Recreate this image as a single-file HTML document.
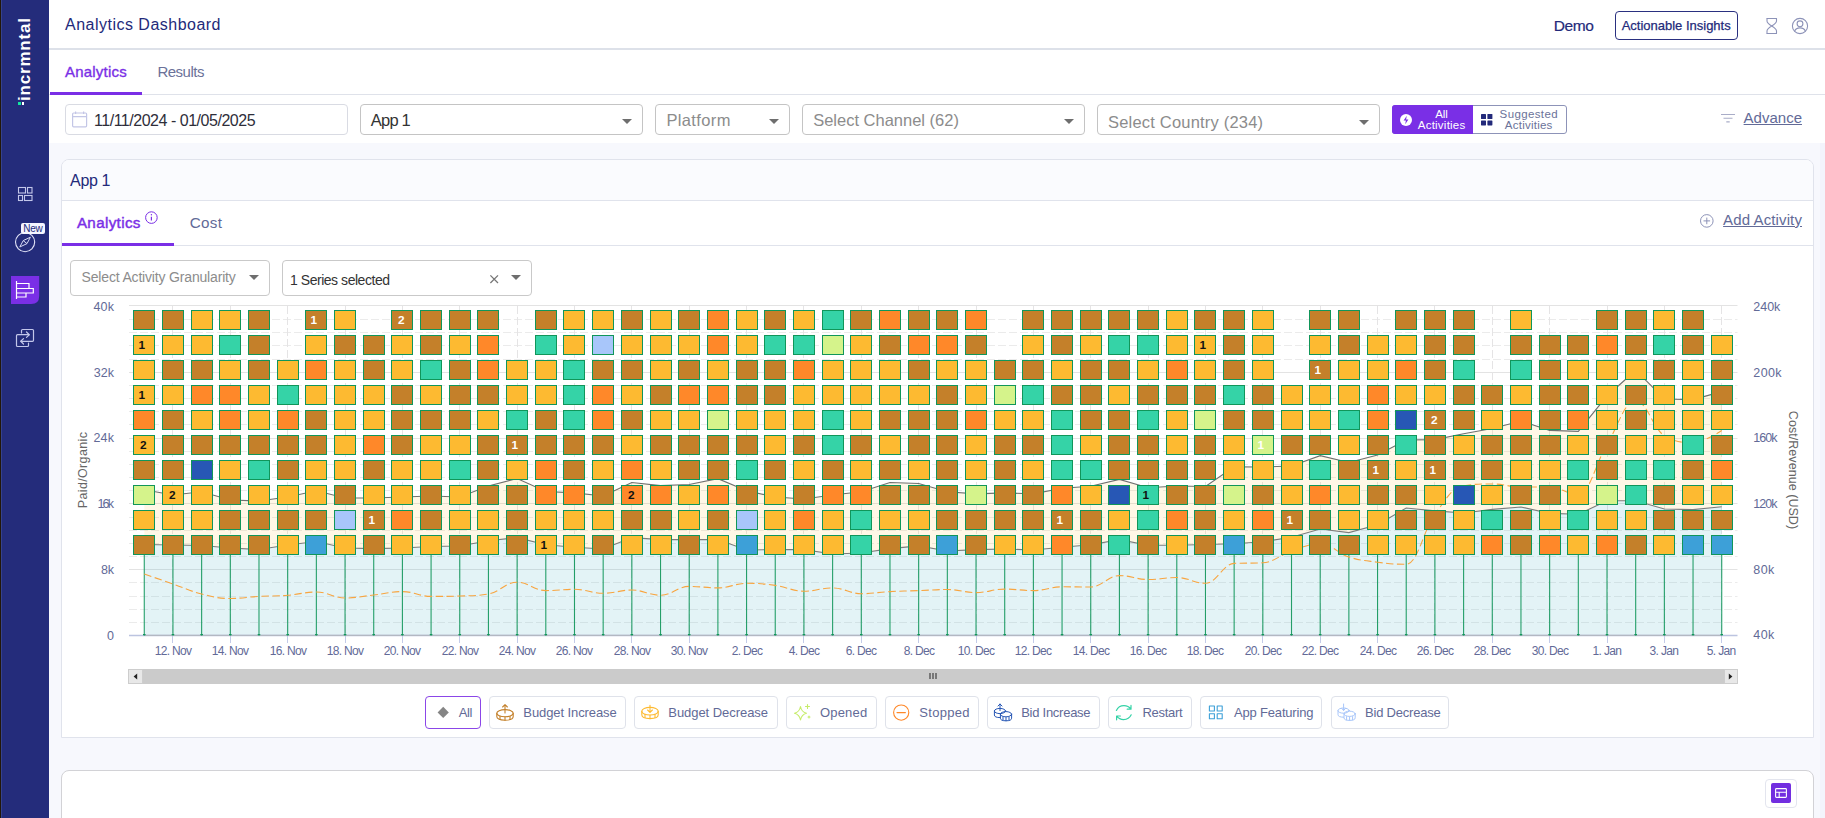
<!DOCTYPE html>
<html lang="en"><head><meta charset="utf-8"><title>Analytics Dashboard</title>
<style>
html,body{margin:0;padding:0}
body{width:1825px;height:818px;overflow:hidden;position:relative;background:#f7f8fd;font-family:"Liberation Sans",sans-serif}
.t{position:absolute;white-space:nowrap;line-height:1em;display:block}
.abs{position:absolute;box-sizing:border-box}
.sel{position:absolute;box-sizing:border-box;background:#fff;border:1px solid #c4c4c4;border-radius:4px}
.arr{position:absolute;width:0;height:0;border-left:5px solid transparent;border-right:5px solid transparent;border-top:5px solid #6e6e6e}
.lg{position:absolute;box-sizing:border-box;top:696px;height:32.5px;border:1px solid #dfe2ea;border-radius:4px;background:#fff}
svg{position:absolute;overflow:visible}
</style></head><body>

<div class="abs" style="left:0;top:0;width:49px;height:818px;background:#242c7b"></div>
<div class="abs" style="left:0;top:0;width:2px;height:818px;background:#34428e"></div>
<div class="abs" style="left:0;top:0;width:1px;height:818px;background:#231708"></div>
<div class="abs" style="left:0;top:0;width:49px;height:120px"><span class="t" style="left:30px;top:101.2px;font-size:17px;font-weight:700;color:#fff;letter-spacing:0.8px;transform-origin:0 0;transform:rotate(-90deg) translateY(-14.39px)">incrmntal</span></div>
<div class="abs" style="left:18px;top:102px;width:2.9px;height:3px;background:#12e6a0"></div>
<div class="abs" style="left:22px;top:102px;width:2.1px;height:3px;background:#fff"></div>
<svg style="left:0;top:0" width="50" height="400" viewBox="0 0 50 400" fill="none"><g stroke="#c3c7ea" stroke-width="1.1"><rect x="18.5" y="187.5" width="7" height="5.5"/><rect x="27.5" y="187.5" width="4.5" height="5.5"/><rect x="18.5" y="195.5" width="4" height="5"/><rect x="24.5" y="195.5" width="7.5" height="5"/></g><circle cx="25.1" cy="242.1" r="9.6" stroke="#e1e3f7" stroke-width="1.1"/><path d="M19.8 247 L23.2 240.6 L30.4 237.2 L27 243.6 Z M23.2 240.6 L27 243.6" stroke="#d5d8f3" stroke-width="1"/><path d="M11 276 H39.2 V296 Q39.2 304 31.2 304 H11 Z" fill="#7a2fe6"/><g stroke="#fff" stroke-width="1.2"><path d="M16.5 281 V299"/><path d="M16.5 283.5 H29 V288.5 H16.5"/><path d="M29 288.5 H33.3 V293 H16.5"/><path d="M26 293 V297 H16.5"/></g><g stroke="#c3c7ea" stroke-width="1.2" stroke-linejoin="round" stroke-linecap="round"><path d="M21.5 333 V330.5 Q21.5 329.5 22.5 329.5 H32.5 Q33.5 329.5 33.5 330.5 V340.3 Q33.5 341.3 32.5 341.3 H21"/><path d="M28.5 343 V345.5 Q28.5 346.5 27.5 346.5 H17.5 Q16.5 346.5 16.5 345.5 V335.7 Q16.5 334.7 17.5 334.7 H29"/><path d="M26.5 332 L29.3 334.7 L26.5 337.4"/><path d="M23.5 338.6 L20.7 341.3 L23.5 344"/></g></svg>
<div class="abs" style="left:21.3px;top:223.2px;width:23.5px;height:10.8px;background:#f4f5ff;border-radius:2px"></div>
<span class="t" style="left:23.20px;top:223.70px;font-size:10px;color:#232a7a;letter-spacing:-0.254px;">New</span>
<div class="abs" style="left:49px;top:0;width:1776px;height:50px;background:#fff;border-bottom:2px solid #dde1e9"></div>
<span class="t" style="left:65.00px;top:17.20px;font-size:16px;color:#232a7a;letter-spacing:0.487px;">Analytics Dashboard</span>
<span class="t" style="left:1553.70px;top:17.75px;font-size:15.5px;color:#232a7a;letter-spacing:-0.349px;-webkit-text-stroke:0.2px #232a7a;">Demo</span>
<div class="abs" style="left:1615px;top:11px;width:123px;height:29px;border:1px solid #2a3080;border-radius:4px;background:#fff"></div>
<span class="t" style="left:1621.70px;top:18.80px;font-size:13px;color:#232a7a;letter-spacing:-0.007px;-webkit-text-stroke:0.25px #232a7a;">Actionable Insights</span>
<svg style="left:1760px;top:14px" width="60" height="26" viewBox="1760 14 60 26" fill="none" stroke="#8d93b8" stroke-width="1.1" stroke-linejoin="round"><path d="M1766.5 18.5 H1777 M1766.5 33.5 H1777"/><path d="M1767 18.5 V21 Q1767 23 1771.7 26 Q1776.5 23 1776.5 21 V18.5 M1767 33.5 V31 Q1767 29 1771.7 26 Q1776.5 29 1776.5 31 V33.5"/><circle cx="1800" cy="26" r="7.6"/><circle cx="1800" cy="23.8" r="2.9"/><path d="M1794.6 31.3 Q1795.8 27.9 1800 27.9 Q1804.2 27.9 1805.4 31.3"/></svg>
<div class="abs" style="left:49px;top:50px;width:1776px;height:45px;background:#fff;border-bottom:1px solid #dfe2ea"></div>
<div class="abs" style="left:50px;top:92px;width:92px;height:3px;background:#7a2fe6"></div>
<span class="t" style="left:65.00px;top:63.70px;font-size:15px;color:#7a2fe6;letter-spacing:0.210px;-webkit-text-stroke:0.35px #7a2fe6;">Analytics</span>
<span class="t" style="left:157.40px;top:63.70px;font-size:15px;color:#6b7299;letter-spacing:-0.503px;">Results</span>
<div class="abs" style="left:49px;top:95px;width:1776px;height:48px;background:#fff"></div>
<div class="abs" style="left:65px;top:104px;width:283px;height:31px;border:1px solid #d9dbe3;border-radius:4px;background:#fff"></div>
<svg style="left:70px;top:110px" width="20" height="20" viewBox="0 0 20 20" fill="none" stroke="#c3c6e6" stroke-width="1.2"><rect x="2.6" y="3" width="14" height="13.8" rx="1"/><path d="M2.6 6.6 H16.6 M5.6 1.4 V4 M13.6 1.4 V4"/></svg>
<span class="t" style="left:94.00px;top:113.00px;font-size:16px;color:#2e2e3a;letter-spacing:-0.473px;">11/11/2024 - 01/05/2025</span>
<div class="sel" style="left:360px;top:104px;width:282.5px;height:30.5px"></div>
<span class="t" style="left:370.80px;top:111.75px;font-size:16.5px;color:#333;letter-spacing:-0.779px;">App 1</span>
<div class="arr" style="left:622px;top:119px"></div>
<div class="sel" style="left:655px;top:104px;width:134.5px;height:30.5px"></div>
<span class="t" style="left:666.40px;top:111.75px;font-size:16.5px;color:#8c8c8c;letter-spacing:0.367px;">Platform</span>
<div class="arr" style="left:769px;top:119px"></div>
<div class="sel" style="left:802px;top:104px;width:282.5px;height:30.5px"></div>
<span class="t" style="left:813.20px;top:111.75px;font-size:16.5px;color:#8c8c8c;letter-spacing:-0.007px;">Select Channel (62)</span>
<div class="arr" style="left:1063.5px;top:119px"></div>
<div class="sel" style="left:1097px;top:104px;width:282.5px;height:31px"></div>
<span class="t" style="left:1108.00px;top:113.75px;font-size:16.5px;color:#8c8c8c;letter-spacing:0.194px;">Select Country (234)</span>
<div class="arr" style="left:1358.5px;top:119.5px"></div>
<div class="abs" style="left:1392px;top:105px;width:175px;height:29px;border:1px solid #8d93b8;border-radius:3px;background:#fff"></div>
<div class="abs" style="left:1392px;top:105px;width:80.6px;height:29px;border-radius:3px 0 0 3px;background:#7a2fe6"></div>
<svg style="left:1399px;top:113px" width="14" height="14" viewBox="0 0 14 14"><circle cx="7" cy="7" r="6" fill="#fff"/><path d="M7.8 2.8 L4.6 7.6 H6.9 L6.2 11.2 L9.4 6.4 H7.1 Z" fill="#7a2fe6"/></svg>
<span class="t" style="left:1435.25px;top:109.05px;font-size:11.5px;color:#fff;letter-spacing:-0.141px;">All</span>
<span class="t" style="left:1417.75px;top:120.05px;font-size:11.5px;color:#fff;letter-spacing:0.237px;">Activities</span>
<svg style="left:1481px;top:113.5px" width="12" height="12" viewBox="0 0 12 12" fill="#232a7a"><rect x="0" y="0" width="5" height="5" rx=".6"/><rect x="6.4" y="0" width="5" height="5" rx=".6"/><rect x="0" y="6.4" width="5" height="5" rx=".6"/><rect x="6.4" y="6.4" width="5" height="5" rx=".6"/></svg>
<span class="t" style="left:1499.60px;top:109.05px;font-size:11.5px;color:#6b7299;letter-spacing:0.377px;">Suggested</span>
<span class="t" style="left:1504.85px;top:120.05px;font-size:11.5px;color:#6b7299;letter-spacing:0.237px;">Activities</span>
<svg style="left:1720px;top:112px" width="16" height="12" viewBox="0 0 16 12" stroke="#a9adc8" stroke-width="1.1" fill="none"><path d="M1 2.5 H15 M3.5 6.2 H12.5 M6.3 9.9 H9.7"/></svg>
<span class="t" style="left:1743.60px;top:109.60px;font-size:15px;color:#626a97;text-decoration:underline;text-underline-offset:1px;">Advance</span>
<div class="abs" style="left:61px;top:159px;width:1753px;height:579px;background:#fff;border:1px solid #e0e3ec;border-radius:8px 8px 0 0"></div>
<div class="abs" style="left:62px;top:160px;width:1751px;height:41px;background:#fafbfe;border-bottom:1px solid #e0e3ec;border-radius:7px 7px 0 0"></div>
<span class="t" style="left:70.10px;top:172.70px;font-size:16px;color:#232a7a;letter-spacing:-0.378px;">App 1</span>
<div class="abs" style="left:62px;top:245px;width:1751px;height:1px;background:#e0e3ec"></div>
<div class="abs" style="left:62px;top:243px;width:111.6px;height:3px;background:#7a2fe6"></div>
<span class="t" style="left:76.90px;top:214.80px;font-size:15.2px;color:#7a2fe6;letter-spacing:0.348px;-webkit-text-stroke:0.45px #7a2fe6;">Analytics</span>
<svg style="left:143.7px;top:210.4px" width="16" height="16" viewBox="0 0 16 16" fill="none" stroke="#7a2fe6" stroke-width="1"><circle cx="7.4" cy="7.6" r="5.8"/><path d="M7.4 6.8 V10.6" stroke-width="1.2"/><circle cx="7.4" cy="4.8" r=".7" fill="#7a2fe6" stroke="none"/></svg>
<span class="t" style="left:189.80px;top:214.80px;font-size:15.2px;color:#626a97;letter-spacing:0.316px;">Cost</span>
<svg style="left:1699px;top:213px" width="16" height="16" viewBox="0 0 16 16" fill="none" stroke="#8d93b8" stroke-width="1"><circle cx="7.8" cy="7.9" r="6.3"/><path d="M7.8 4.6 V11.2 M4.5 7.9 H11.1"/></svg>
<span class="t" style="left:1723.10px;top:211.80px;font-size:15px;color:#626a97;letter-spacing:0.115px;text-decoration:underline;text-underline-offset:1px;">Add Activity</span>
<div class="sel" style="left:70px;top:260px;width:199.5px;height:35.5px;border-color:#c9c9c9"></div>
<span class="t" style="left:81.60px;top:269.60px;font-size:14px;color:#8c8c8c;letter-spacing:-0.174px;">Select Activity Granularity</span>
<div class="arr" style="left:248.6px;top:275px"></div>
<div class="sel" style="left:282px;top:260px;width:249.7px;height:35.5px;border-color:#c9c9c9"></div>
<span class="t" style="left:290.00px;top:272.60px;font-size:14px;color:#333;letter-spacing:-0.462px;">1 Series selected</span>
<svg style="left:488px;top:273px" width="12" height="12" viewBox="0 0 12 12" stroke="#777" stroke-width="1.3"><path d="M2.4 2.4 L10 10 M10 2.4 L2.4 10"/></svg>
<div class="arr" style="left:510.8px;top:275px"></div>
<svg style="left:0;top:0" width="1825" height="818" viewBox="0 0 1825 818" font-family="Liberation Sans, sans-serif">
<path d="M129 319.5 H1737.5" stroke="#ebebeb" stroke-width="1" stroke-dasharray="8 3"/>
<path d="M129 332.5 H1737.5" stroke="#ebebeb" stroke-width="1" stroke-dasharray="8 3"/>
<path d="M129 345.5 H1737.5" stroke="#ebebeb" stroke-width="1" stroke-dasharray="8 3"/>
<path d="M129 359.5 H1737.5" stroke="#ebebeb" stroke-width="1" stroke-dasharray="8 3"/>
<path d="M129 385.5 H1737.5" stroke="#ebebeb" stroke-width="1" stroke-dasharray="8 3"/>
<path d="M129 398.5 H1737.5" stroke="#ebebeb" stroke-width="1" stroke-dasharray="8 3"/>
<path d="M129 411.5 H1737.5" stroke="#ebebeb" stroke-width="1" stroke-dasharray="8 3"/>
<path d="M129 424.5 H1737.5" stroke="#ebebeb" stroke-width="1" stroke-dasharray="8 3"/>
<path d="M129 451.5 H1737.5" stroke="#ebebeb" stroke-width="1" stroke-dasharray="8 3"/>
<path d="M129 464.5 H1737.5" stroke="#ebebeb" stroke-width="1" stroke-dasharray="8 3"/>
<path d="M129 477.5 H1737.5" stroke="#ebebeb" stroke-width="1" stroke-dasharray="8 3"/>
<path d="M129 490.5 H1737.5" stroke="#ebebeb" stroke-width="1" stroke-dasharray="8 3"/>
<path d="M129 517.5 H1737.5" stroke="#ebebeb" stroke-width="1" stroke-dasharray="8 3"/>
<path d="M129 530.5 H1737.5" stroke="#ebebeb" stroke-width="1" stroke-dasharray="8 3"/>
<path d="M129 543.5 H1737.5" stroke="#ebebeb" stroke-width="1" stroke-dasharray="8 3"/>
<path d="M129 556.5 H1737.5" stroke="#ebebeb" stroke-width="1" stroke-dasharray="8 3"/>
<path d="M129 582.5 H1737.5" stroke="#ebebeb" stroke-width="1" stroke-dasharray="8 3"/>
<path d="M129 596.5 H1737.5" stroke="#ebebeb" stroke-width="1" stroke-dasharray="8 3"/>
<path d="M129 609.5 H1737.5" stroke="#ebebeb" stroke-width="1" stroke-dasharray="8 3"/>
<path d="M129 622.5 H1737.5" stroke="#ebebeb" stroke-width="1" stroke-dasharray="8 3"/>
<path d="M129 305.5 H1737.5" stroke="#e3e3e3" stroke-width="1"/>
<path d="M129 372.5 H1737.5" stroke="#e3e3e3" stroke-width="1"/>
<path d="M129 438.5 H1737.5" stroke="#e3e3e3" stroke-width="1"/>
<path d="M129 503.5 H1737.5" stroke="#e3e3e3" stroke-width="1"/>
<path d="M129 569.5 H1737.5" stroke="#e3e3e3" stroke-width="1"/>
<path d="M172.5 306 V635" stroke="#e5e4e5" stroke-width="1" stroke-dasharray="8 3"/>
<path d="M230.5 306 V635" stroke="#e5e4e5" stroke-width="1" stroke-dasharray="8 3"/>
<path d="M287.5 306 V635" stroke="#e5e4e5" stroke-width="1" stroke-dasharray="8 3"/>
<path d="M345.5 306 V635" stroke="#e5e4e5" stroke-width="1" stroke-dasharray="8 3"/>
<path d="M402.5 306 V635" stroke="#e5e4e5" stroke-width="1" stroke-dasharray="8 3"/>
<path d="M459.5 306 V635" stroke="#e5e4e5" stroke-width="1" stroke-dasharray="8 3"/>
<path d="M517.5 306 V635" stroke="#e5e4e5" stroke-width="1" stroke-dasharray="8 3"/>
<path d="M574.5 306 V635" stroke="#e5e4e5" stroke-width="1" stroke-dasharray="8 3"/>
<path d="M631.5 306 V635" stroke="#e5e4e5" stroke-width="1" stroke-dasharray="8 3"/>
<path d="M689.5 306 V635" stroke="#e5e4e5" stroke-width="1" stroke-dasharray="8 3"/>
<path d="M746.5 306 V635" stroke="#e5e4e5" stroke-width="1" stroke-dasharray="8 3"/>
<path d="M803.5 306 V635" stroke="#e5e4e5" stroke-width="1" stroke-dasharray="8 3"/>
<path d="M861.5 306 V635" stroke="#e5e4e5" stroke-width="1" stroke-dasharray="8 3"/>
<path d="M918.5 306 V635" stroke="#e5e4e5" stroke-width="1" stroke-dasharray="8 3"/>
<path d="M976.5 306 V635" stroke="#e5e4e5" stroke-width="1" stroke-dasharray="8 3"/>
<path d="M1033.5 306 V635" stroke="#e5e4e5" stroke-width="1" stroke-dasharray="8 3"/>
<path d="M1090.5 306 V635" stroke="#e5e4e5" stroke-width="1" stroke-dasharray="8 3"/>
<path d="M1148.5 306 V635" stroke="#e5e4e5" stroke-width="1" stroke-dasharray="8 3"/>
<path d="M1205.5 306 V635" stroke="#e5e4e5" stroke-width="1" stroke-dasharray="8 3"/>
<path d="M1262.5 306 V635" stroke="#e5e4e5" stroke-width="1" stroke-dasharray="8 3"/>
<path d="M1320.5 306 V635" stroke="#e5e4e5" stroke-width="1" stroke-dasharray="8 3"/>
<path d="M1377.5 306 V635" stroke="#e5e4e5" stroke-width="1" stroke-dasharray="8 3"/>
<path d="M1434.5 306 V635" stroke="#e5e4e5" stroke-width="1" stroke-dasharray="8 3"/>
<path d="M1492.5 306 V635" stroke="#e5e4e5" stroke-width="1" stroke-dasharray="8 3"/>
<path d="M1549.5 306 V635" stroke="#e5e4e5" stroke-width="1" stroke-dasharray="8 3"/>
<path d="M1607.5 306 V635" stroke="#e5e4e5" stroke-width="1" stroke-dasharray="8 3"/>
<path d="M1664.5 306 V635" stroke="#e5e4e5" stroke-width="1" stroke-dasharray="8 3"/>
<path d="M1721.5 306 V635" stroke="#e5e4e5" stroke-width="1" stroke-dasharray="8 3"/>
<path d="M144.3 635 L144.3 544.5 L173.0 545.0 L201.6 545.5 L230.3 548.0 L259.0 549.5 L287.7 545.0 L316.4 541.5 L345.0 548.0 L373.7 548.6 L402.4 548.0 L431.1 546.5 L459.8 546.0 L488.4 540.7 L517.1 537.6 L545.8 544.8 L574.5 547.3 L603.2 549.0 L631.8 537.6 L660.5 539.6 L689.2 539.6 L717.9 539.6 L746.6 550.0 L775.3 549.6 L803.9 549.6 L832.6 554.0 L861.3 553.0 L890.0 548.6 L918.7 545.9 L947.3 551.0 L976.0 549.6 L1004.7 549.0 L1033.4 550.0 L1062.1 547.3 L1090.7 544.8 L1119.4 539.6 L1148.1 545.2 L1176.8 545.2 L1205.5 544.5 L1234.1 543.7 L1262.8 541.7 L1291.5 537.3 L1320.2 529.0 L1348.9 532.6 L1377.6 524.7 L1406.2 508.0 L1434.9 510.9 L1463.6 513.0 L1492.3 509.4 L1521.0 507.0 L1549.6 513.4 L1578.3 514.3 L1607.0 500.8 L1635.7 500.8 L1664.4 509.0 L1693.0 509.6 L1721.7 506.7 L1721.7 635 Z" fill="#46b0c4" fill-opacity="0.15"/>
<path d="M144.3 489.7 L144.3 489.7 L173.0 495.0 L201.6 491.8 L230.3 500.0 L259.0 501.0 L287.7 497.0 L316.4 490.8 L345.0 498.0 L373.7 498.0 L402.4 497.0 L431.1 496.0 L459.8 497.0 L488.4 486.0 L517.1 478.5 L545.8 491.5 L574.5 492.9 L603.2 496.0 L631.8 482.5 L660.5 485.6 L689.2 484.5 L717.9 478.7 L746.6 490.8 L775.3 497.0 L803.9 499.0 L832.6 495.0 L861.3 491.8 L890.0 482.5 L918.7 483.5 L947.3 491.8 L976.0 493.9 L1004.7 492.9 L1033.4 493.9 L1062.1 488.3 L1090.7 486.2 L1119.4 479.4 L1148.1 487.7 L1176.8 486.0 L1205.5 486.5 L1234.1 466.9 L1262.8 467.0 L1291.5 466.0 L1320.2 455.7 L1348.9 462.5 L1377.6 455.0 L1406.2 440.0 L1434.9 439.6 L1463.6 433.7 L1492.3 428.5 L1521.0 421.0 L1549.6 430.4 L1578.3 431.3 L1607.0 396.0 L1635.7 370.2 L1664.4 399.0 L1693.0 399.6 L1721.7 391.6 L1721.7 506.7 L1693.0 509.6 L1664.4 509.0 L1635.7 500.8 L1607.0 500.8 L1578.3 514.3 L1549.6 513.4 L1521.0 507.0 L1492.3 509.4 L1463.6 513.0 L1434.9 510.9 L1406.2 508.0 L1377.6 524.7 L1348.9 532.6 L1320.2 529.0 L1291.5 537.3 L1262.8 541.7 L1234.1 543.7 L1205.5 544.5 L1176.8 545.2 L1148.1 545.2 L1119.4 539.6 L1090.7 544.8 L1062.1 547.3 L1033.4 550.0 L1004.7 549.0 L976.0 549.6 L947.3 551.0 L918.7 545.9 L890.0 548.6 L861.3 553.0 L832.6 554.0 L803.9 549.6 L775.3 549.6 L746.6 550.0 L717.9 539.6 L689.2 539.6 L660.5 539.6 L631.8 537.6 L603.2 549.0 L574.5 547.3 L545.8 544.8 L517.1 537.6 L488.4 540.7 L459.8 546.0 L431.1 546.5 L402.4 548.0 L373.7 548.6 L345.0 548.0 L316.4 541.5 L287.7 545.0 L259.0 549.5 L230.3 548.0 L201.6 545.5 L173.0 545.0 L144.3 544.5 Z" fill="#fdba31" fill-opacity="0.12"/>
<path d="M144.3 489.7 L173.0 495.0 L201.6 491.8 L230.3 500.0 L259.0 501.0 L287.7 497.0 L316.4 490.8 L345.0 498.0 L373.7 498.0 L402.4 497.0 L431.1 496.0 L459.8 497.0 L488.4 486.0 L517.1 478.5 L545.8 491.5 L574.5 492.9 L603.2 496.0 L631.8 482.5 L660.5 485.6 L689.2 484.5 L717.9 478.7 L746.6 490.8 L775.3 497.0 L803.9 499.0 L832.6 495.0 L861.3 491.8 L890.0 482.5 L918.7 483.5 L947.3 491.8 L976.0 493.9 L1004.7 492.9 L1033.4 493.9 L1062.1 488.3 L1090.7 486.2 L1119.4 479.4 L1148.1 487.7 L1176.8 486.0 L1205.5 486.5 L1234.1 466.9 L1262.8 467.0 L1291.5 466.0 L1320.2 455.7 L1348.9 462.5 L1377.6 455.0 L1406.2 440.0 L1434.9 439.6 L1463.6 433.7 L1492.3 428.5 L1521.0 421.0 L1549.6 430.4 L1578.3 431.3 L1607.0 396.0 L1635.7 370.2 L1664.4 399.0 L1693.0 399.6 L1721.7 391.6" fill="none" stroke="#707070" stroke-width="1.15"/>
<path d="M144.3 544.5 L173.0 545.0 L201.6 545.5 L230.3 548.0 L259.0 549.5 L287.7 545.0 L316.4 541.5 L345.0 548.0 L373.7 548.6 L402.4 548.0 L431.1 546.5 L459.8 546.0 L488.4 540.7 L517.1 537.6 L545.8 544.8 L574.5 547.3 L603.2 549.0 L631.8 537.6 L660.5 539.6 L689.2 539.6 L717.9 539.6 L746.6 550.0 L775.3 549.6 L803.9 549.6 L832.6 554.0 L861.3 553.0 L890.0 548.6 L918.7 545.9 L947.3 551.0 L976.0 549.6 L1004.7 549.0 L1033.4 550.0 L1062.1 547.3 L1090.7 544.8 L1119.4 539.6 L1148.1 545.2 L1176.8 545.2 L1205.5 544.5 L1234.1 543.7 L1262.8 541.7 L1291.5 537.3 L1320.2 529.0 L1348.9 532.6 L1377.6 524.7 L1406.2 508.0 L1434.9 510.9 L1463.6 513.0 L1492.3 509.4 L1521.0 507.0 L1549.6 513.4 L1578.3 514.3 L1607.0 500.8 L1635.7 500.8 L1664.4 509.0 L1693.0 509.6 L1721.7 506.7" fill="none" stroke="#7c7c7c" stroke-width="1.1"/>
<path d="M129 635.5 H1737.5" stroke="#bcc4e0" stroke-width="1.3"/>
<path d="M172.5 636 V643" stroke="#c3cbe8" stroke-width="1"/>
<path d="M230.5 636 V643" stroke="#c3cbe8" stroke-width="1"/>
<path d="M287.5 636 V643" stroke="#c3cbe8" stroke-width="1"/>
<path d="M345.5 636 V643" stroke="#c3cbe8" stroke-width="1"/>
<path d="M402.5 636 V643" stroke="#c3cbe8" stroke-width="1"/>
<path d="M459.5 636 V643" stroke="#c3cbe8" stroke-width="1"/>
<path d="M517.5 636 V643" stroke="#c3cbe8" stroke-width="1"/>
<path d="M574.5 636 V643" stroke="#c3cbe8" stroke-width="1"/>
<path d="M631.5 636 V643" stroke="#c3cbe8" stroke-width="1"/>
<path d="M689.5 636 V643" stroke="#c3cbe8" stroke-width="1"/>
<path d="M746.5 636 V643" stroke="#c3cbe8" stroke-width="1"/>
<path d="M803.5 636 V643" stroke="#c3cbe8" stroke-width="1"/>
<path d="M861.5 636 V643" stroke="#c3cbe8" stroke-width="1"/>
<path d="M918.5 636 V643" stroke="#c3cbe8" stroke-width="1"/>
<path d="M976.5 636 V643" stroke="#c3cbe8" stroke-width="1"/>
<path d="M1033.5 636 V643" stroke="#c3cbe8" stroke-width="1"/>
<path d="M1090.5 636 V643" stroke="#c3cbe8" stroke-width="1"/>
<path d="M1148.5 636 V643" stroke="#c3cbe8" stroke-width="1"/>
<path d="M1205.5 636 V643" stroke="#c3cbe8" stroke-width="1"/>
<path d="M1262.5 636 V643" stroke="#c3cbe8" stroke-width="1"/>
<path d="M1320.5 636 V643" stroke="#c3cbe8" stroke-width="1"/>
<path d="M1377.5 636 V643" stroke="#c3cbe8" stroke-width="1"/>
<path d="M1434.5 636 V643" stroke="#c3cbe8" stroke-width="1"/>
<path d="M1492.5 636 V643" stroke="#c3cbe8" stroke-width="1"/>
<path d="M1549.5 636 V643" stroke="#c3cbe8" stroke-width="1"/>
<path d="M1607.5 636 V643" stroke="#c3cbe8" stroke-width="1"/>
<path d="M1664.5 636 V643" stroke="#c3cbe8" stroke-width="1"/>
<path d="M1721.5 636 V643" stroke="#c3cbe8" stroke-width="1"/>
<path d="M144.3 635.3 H1721.7" stroke="#b3b8c2" stroke-width="1.2"/>
<path d="M144.27 555 V635.5" stroke="#10965a" stroke-width="1.1" stroke-opacity="0.9"/><path d="M142.97 634.6 H145.57" stroke="#10965a" stroke-width="1.2"/>
<path d="M172.95 555 V635.5" stroke="#10965a" stroke-width="1.1" stroke-opacity="0.9"/><path d="M171.65 634.6 H174.25" stroke="#10965a" stroke-width="1.2"/>
<path d="M201.63 555 V635.5" stroke="#10965a" stroke-width="1.1" stroke-opacity="0.9"/><path d="M200.33 634.6 H202.93" stroke="#10965a" stroke-width="1.2"/>
<path d="M230.31 555 V635.5" stroke="#10965a" stroke-width="1.1" stroke-opacity="0.9"/><path d="M229.01 634.6 H231.61" stroke="#10965a" stroke-width="1.2"/>
<path d="M258.99 555 V635.5" stroke="#10965a" stroke-width="1.1" stroke-opacity="0.9"/><path d="M257.69 634.6 H260.29" stroke="#10965a" stroke-width="1.2"/>
<path d="M287.68 555 V635.5" stroke="#10965a" stroke-width="1.1" stroke-opacity="0.9"/><path d="M286.38 634.6 H288.98" stroke="#10965a" stroke-width="1.2"/>
<path d="M316.36 555 V635.5" stroke="#10965a" stroke-width="1.1" stroke-opacity="0.9"/><path d="M315.06 634.6 H317.66" stroke="#10965a" stroke-width="1.2"/>
<path d="M345.04 555 V635.5" stroke="#10965a" stroke-width="1.1" stroke-opacity="0.9"/><path d="M343.74 634.6 H346.34" stroke="#10965a" stroke-width="1.2"/>
<path d="M373.72 555 V635.5" stroke="#10965a" stroke-width="1.1" stroke-opacity="0.9"/><path d="M372.42 634.6 H375.02" stroke="#10965a" stroke-width="1.2"/>
<path d="M402.40 555 V635.5" stroke="#10965a" stroke-width="1.1" stroke-opacity="0.9"/><path d="M401.10 634.6 H403.70" stroke="#10965a" stroke-width="1.2"/>
<path d="M431.08 555 V635.5" stroke="#10965a" stroke-width="1.1" stroke-opacity="0.9"/><path d="M429.78 634.6 H432.38" stroke="#10965a" stroke-width="1.2"/>
<path d="M459.76 555 V635.5" stroke="#10965a" stroke-width="1.1" stroke-opacity="0.9"/><path d="M458.46 634.6 H461.06" stroke="#10965a" stroke-width="1.2"/>
<path d="M488.44 555 V635.5" stroke="#10965a" stroke-width="1.1" stroke-opacity="0.9"/><path d="M487.14 634.6 H489.74" stroke="#10965a" stroke-width="1.2"/>
<path d="M517.12 555 V635.5" stroke="#10965a" stroke-width="1.1" stroke-opacity="0.9"/><path d="M515.82 634.6 H518.42" stroke="#10965a" stroke-width="1.2"/>
<path d="M545.80 555 V635.5" stroke="#10965a" stroke-width="1.1" stroke-opacity="0.9"/><path d="M544.50 634.6 H547.10" stroke="#10965a" stroke-width="1.2"/>
<path d="M574.49 555 V635.5" stroke="#10965a" stroke-width="1.1" stroke-opacity="0.9"/><path d="M573.19 634.6 H575.78" stroke="#10965a" stroke-width="1.2"/>
<path d="M603.17 555 V635.5" stroke="#10965a" stroke-width="1.1" stroke-opacity="0.9"/><path d="M601.87 634.6 H604.47" stroke="#10965a" stroke-width="1.2"/>
<path d="M631.85 555 V635.5" stroke="#10965a" stroke-width="1.1" stroke-opacity="0.9"/><path d="M630.55 634.6 H633.15" stroke="#10965a" stroke-width="1.2"/>
<path d="M660.53 555 V635.5" stroke="#10965a" stroke-width="1.1" stroke-opacity="0.9"/><path d="M659.23 634.6 H661.83" stroke="#10965a" stroke-width="1.2"/>
<path d="M689.21 555 V635.5" stroke="#10965a" stroke-width="1.1" stroke-opacity="0.9"/><path d="M687.91 634.6 H690.51" stroke="#10965a" stroke-width="1.2"/>
<path d="M717.89 555 V635.5" stroke="#10965a" stroke-width="1.1" stroke-opacity="0.9"/><path d="M716.59 634.6 H719.19" stroke="#10965a" stroke-width="1.2"/>
<path d="M746.57 555 V635.5" stroke="#10965a" stroke-width="1.1" stroke-opacity="0.9"/><path d="M745.27 634.6 H747.87" stroke="#10965a" stroke-width="1.2"/>
<path d="M775.25 555 V635.5" stroke="#10965a" stroke-width="1.1" stroke-opacity="0.9"/><path d="M773.95 634.6 H776.55" stroke="#10965a" stroke-width="1.2"/>
<path d="M803.93 555 V635.5" stroke="#10965a" stroke-width="1.1" stroke-opacity="0.9"/><path d="M802.63 634.6 H805.23" stroke="#10965a" stroke-width="1.2"/>
<path d="M832.61 555 V635.5" stroke="#10965a" stroke-width="1.1" stroke-opacity="0.9"/><path d="M831.31 634.6 H833.91" stroke="#10965a" stroke-width="1.2"/>
<path d="M861.29 555 V635.5" stroke="#10965a" stroke-width="1.1" stroke-opacity="0.9"/><path d="M860.00 634.6 H862.59" stroke="#10965a" stroke-width="1.2"/>
<path d="M889.98 555 V635.5" stroke="#10965a" stroke-width="1.1" stroke-opacity="0.9"/><path d="M888.68 634.6 H891.28" stroke="#10965a" stroke-width="1.2"/>
<path d="M918.66 555 V635.5" stroke="#10965a" stroke-width="1.1" stroke-opacity="0.9"/><path d="M917.36 634.6 H919.96" stroke="#10965a" stroke-width="1.2"/>
<path d="M947.34 555 V635.5" stroke="#10965a" stroke-width="1.1" stroke-opacity="0.9"/><path d="M946.04 634.6 H948.64" stroke="#10965a" stroke-width="1.2"/>
<path d="M976.02 555 V635.5" stroke="#10965a" stroke-width="1.1" stroke-opacity="0.9"/><path d="M974.72 634.6 H977.32" stroke="#10965a" stroke-width="1.2"/>
<path d="M1004.70 555 V635.5" stroke="#10965a" stroke-width="1.1" stroke-opacity="0.9"/><path d="M1003.40 634.6 H1006.00" stroke="#10965a" stroke-width="1.2"/>
<path d="M1033.38 555 V635.5" stroke="#10965a" stroke-width="1.1" stroke-opacity="0.9"/><path d="M1032.08 634.6 H1034.68" stroke="#10965a" stroke-width="1.2"/>
<path d="M1062.06 555 V635.5" stroke="#10965a" stroke-width="1.1" stroke-opacity="0.9"/><path d="M1060.76 634.6 H1063.36" stroke="#10965a" stroke-width="1.2"/>
<path d="M1090.74 555 V635.5" stroke="#10965a" stroke-width="1.1" stroke-opacity="0.9"/><path d="M1089.44 634.6 H1092.04" stroke="#10965a" stroke-width="1.2"/>
<path d="M1119.42 555 V635.5" stroke="#10965a" stroke-width="1.1" stroke-opacity="0.9"/><path d="M1118.12 634.6 H1120.72" stroke="#10965a" stroke-width="1.2"/>
<path d="M1148.11 555 V635.5" stroke="#10965a" stroke-width="1.1" stroke-opacity="0.9"/><path d="M1146.81 634.6 H1149.40" stroke="#10965a" stroke-width="1.2"/>
<path d="M1176.79 555 V635.5" stroke="#10965a" stroke-width="1.1" stroke-opacity="0.9"/><path d="M1175.49 634.6 H1178.09" stroke="#10965a" stroke-width="1.2"/>
<path d="M1205.47 555 V635.5" stroke="#10965a" stroke-width="1.1" stroke-opacity="0.9"/><path d="M1204.17 634.6 H1206.77" stroke="#10965a" stroke-width="1.2"/>
<path d="M1234.15 555 V635.5" stroke="#10965a" stroke-width="1.1" stroke-opacity="0.9"/><path d="M1232.85 634.6 H1235.45" stroke="#10965a" stroke-width="1.2"/>
<path d="M1262.83 555 V635.5" stroke="#10965a" stroke-width="1.1" stroke-opacity="0.9"/><path d="M1261.53 634.6 H1264.13" stroke="#10965a" stroke-width="1.2"/>
<path d="M1291.51 555 V635.5" stroke="#10965a" stroke-width="1.1" stroke-opacity="0.9"/><path d="M1290.21 634.6 H1292.81" stroke="#10965a" stroke-width="1.2"/>
<path d="M1320.19 555 V635.5" stroke="#10965a" stroke-width="1.1" stroke-opacity="0.9"/><path d="M1318.89 634.6 H1321.49" stroke="#10965a" stroke-width="1.2"/>
<path d="M1348.87 555 V635.5" stroke="#10965a" stroke-width="1.1" stroke-opacity="0.9"/><path d="M1347.57 634.6 H1350.17" stroke="#10965a" stroke-width="1.2"/>
<path d="M1377.55 555 V635.5" stroke="#10965a" stroke-width="1.1" stroke-opacity="0.9"/><path d="M1376.25 634.6 H1378.85" stroke="#10965a" stroke-width="1.2"/>
<path d="M1406.23 555 V635.5" stroke="#10965a" stroke-width="1.1" stroke-opacity="0.9"/><path d="M1404.93 634.6 H1407.53" stroke="#10965a" stroke-width="1.2"/>
<path d="M1434.91 555 V635.5" stroke="#10965a" stroke-width="1.1" stroke-opacity="0.9"/><path d="M1433.62 634.6 H1436.21" stroke="#10965a" stroke-width="1.2"/>
<path d="M1463.60 555 V635.5" stroke="#10965a" stroke-width="1.1" stroke-opacity="0.9"/><path d="M1462.30 634.6 H1464.90" stroke="#10965a" stroke-width="1.2"/>
<path d="M1492.28 555 V635.5" stroke="#10965a" stroke-width="1.1" stroke-opacity="0.9"/><path d="M1490.98 634.6 H1493.58" stroke="#10965a" stroke-width="1.2"/>
<path d="M1520.96 555 V635.5" stroke="#10965a" stroke-width="1.1" stroke-opacity="0.9"/><path d="M1519.66 634.6 H1522.26" stroke="#10965a" stroke-width="1.2"/>
<path d="M1549.64 555 V635.5" stroke="#10965a" stroke-width="1.1" stroke-opacity="0.9"/><path d="M1548.34 634.6 H1550.94" stroke="#10965a" stroke-width="1.2"/>
<path d="M1578.32 555 V635.5" stroke="#10965a" stroke-width="1.1" stroke-opacity="0.9"/><path d="M1577.02 634.6 H1579.62" stroke="#10965a" stroke-width="1.2"/>
<path d="M1607.00 555 V635.5" stroke="#10965a" stroke-width="1.1" stroke-opacity="0.9"/><path d="M1605.70 634.6 H1608.30" stroke="#10965a" stroke-width="1.2"/>
<path d="M1635.68 555 V635.5" stroke="#10965a" stroke-width="1.1" stroke-opacity="0.9"/><path d="M1634.38 634.6 H1636.98" stroke="#10965a" stroke-width="1.2"/>
<path d="M1664.36 555 V635.5" stroke="#10965a" stroke-width="1.1" stroke-opacity="0.9"/><path d="M1663.06 634.6 H1665.66" stroke="#10965a" stroke-width="1.2"/>
<path d="M1693.04 555 V635.5" stroke="#10965a" stroke-width="1.1" stroke-opacity="0.9"/><path d="M1691.74 634.6 H1694.34" stroke="#10965a" stroke-width="1.2"/>
<path d="M1721.73 555 V635.5" stroke="#10965a" stroke-width="1.1" stroke-opacity="0.9"/><path d="M1720.43 634.6 H1723.03" stroke="#10965a" stroke-width="1.2"/>
<path d="M144.3 574.0 C144.3 574.0 161.5 580.0 173.0 584.0 C184.4 588.0 190.2 591.1 201.6 594.0 C213.1 596.9 218.8 598.5 230.3 598.5 C241.8 598.5 247.5 597.0 259.0 596.4 C270.5 595.8 276.2 596.2 287.7 595.3 C299.1 594.4 304.9 592.0 316.4 592.0 C327.8 592.0 333.6 598.0 345.0 598.0 C356.5 598.0 362.2 596.3 373.7 595.0 C385.2 593.7 390.9 591.6 402.4 591.6 C413.9 591.6 419.6 596.4 431.1 596.4 C442.6 596.4 448.3 596.4 459.8 596.0 C471.2 595.6 477.0 596.0 488.4 594.0 C499.9 592.0 505.7 582.2 517.1 582.2 C528.6 582.2 534.3 590.6 545.8 590.6 C557.3 590.6 563.0 589.3 574.5 589.3 C586.0 589.3 591.7 593.3 603.2 593.3 C614.6 593.3 620.4 590.0 631.8 590.0 C643.3 590.0 649.1 595.3 660.5 595.3 C672.0 595.3 677.7 586.4 689.2 586.4 C700.7 586.4 706.4 587.9 717.9 587.9 C729.4 587.9 735.1 583.3 746.6 583.3 C758.0 583.3 763.8 583.8 775.3 585.4 C786.7 587.0 792.5 591.2 803.9 591.2 C815.4 591.2 821.1 587.9 832.6 587.9 C844.1 587.9 849.8 593.7 861.3 593.7 C872.8 593.7 878.5 592.2 890.0 591.6 C901.4 591.0 907.2 591.0 918.7 590.6 C930.1 590.2 935.9 589.5 947.3 589.5 C958.8 589.5 964.5 592.6 976.0 592.6 C987.5 592.6 993.2 589.1 1004.7 589.1 C1016.2 589.1 1021.9 590.6 1033.4 590.6 C1044.9 590.6 1050.6 586.8 1062.1 586.8 C1073.5 586.8 1079.3 587.0 1090.7 587.0 C1102.2 587.0 1108.0 575.6 1119.4 575.6 C1130.9 575.6 1136.6 579.5 1148.1 579.5 C1159.6 579.5 1165.3 577.5 1176.8 577.5 C1188.3 577.5 1194.0 583.3 1205.5 583.3 C1216.9 583.3 1222.7 564.0 1234.1 563.4 C1245.6 562.8 1251.4 563.4 1262.8 562.8 C1274.3 562.2 1280.0 554.8 1291.5 551.0 C1303.0 547.2 1308.7 543.7 1320.2 543.7 C1331.7 543.7 1337.4 553.3 1348.9 557.0 C1360.3 560.7 1366.1 560.7 1377.6 562.2 C1389.0 563.7 1394.8 564.3 1406.2 564.3 C1417.7 564.3 1423.4 530.1 1434.9 514.4 C1446.4 498.7 1452.1 487.4 1463.6 485.7 C1475.1 484.0 1480.8 484.0 1492.3 484.0 C1503.7 484.0 1509.5 487.0 1521.0 487.0 C1532.4 487.0 1538.2 487.0 1549.6 487.0 C1561.1 487.0 1566.8 494.4 1578.3 494.4 C1589.8 494.4 1595.5 463.2 1607.0 444.5 C1618.5 425.8 1624.2 401.0 1635.7 401.0 C1647.2 401.0 1652.9 428.9 1664.4 435.7 C1675.8 442.5 1681.6 442.5 1693.0 442.5 C1704.5 442.5 1721.7 430.5 1721.7 430.5" fill="none" stroke="#f8a540" stroke-width="1.1" stroke-dasharray="7.5 3.5"/>
<rect x="133.5" y="310.5" width="21" height="19" fill="#c4802a" stroke="#10965a" stroke-width="1"/><rect x="162.5" y="310.5" width="21" height="19" fill="#c4802a" stroke="#10965a" stroke-width="1"/><rect x="191.5" y="310.5" width="21" height="19" fill="#fdba31" stroke="#10965a" stroke-width="1"/><rect x="219.5" y="310.5" width="21" height="19" fill="#fdba31" stroke="#10965a" stroke-width="1"/><rect x="248.5" y="310.5" width="21" height="19" fill="#c4802a" stroke="#10965a" stroke-width="1"/><rect x="305.5" y="310.5" width="21" height="19" fill="#c4802a" stroke="#10965a" stroke-width="1"/><rect x="334.5" y="310.5" width="21" height="19" fill="#fdba31" stroke="#10965a" stroke-width="1"/><rect x="391.5" y="310.5" width="21" height="19" fill="#c4802a" stroke="#10965a" stroke-width="1"/><rect x="420.5" y="310.5" width="21" height="19" fill="#c4802a" stroke="#10965a" stroke-width="1"/><rect x="449.5" y="310.5" width="21" height="19" fill="#c4802a" stroke="#10965a" stroke-width="1"/><rect x="477.5" y="310.5" width="21" height="19" fill="#c4802a" stroke="#10965a" stroke-width="1"/><rect x="535.5" y="310.5" width="21" height="19" fill="#c4802a" stroke="#10965a" stroke-width="1"/><rect x="563.5" y="310.5" width="21" height="19" fill="#fdba31" stroke="#10965a" stroke-width="1"/><rect x="592.5" y="310.5" width="21" height="19" fill="#fdba31" stroke="#10965a" stroke-width="1"/><rect x="621.5" y="310.5" width="21" height="19" fill="#c4802a" stroke="#10965a" stroke-width="1"/><rect x="650.5" y="310.5" width="21" height="19" fill="#fdba31" stroke="#10965a" stroke-width="1"/><rect x="678.5" y="310.5" width="21" height="19" fill="#c4802a" stroke="#10965a" stroke-width="1"/><rect x="707.5" y="310.5" width="21" height="19" fill="#ff8829" stroke="#10965a" stroke-width="1"/><rect x="736.5" y="310.5" width="21" height="19" fill="#fdba31" stroke="#10965a" stroke-width="1"/><rect x="764.5" y="310.5" width="21" height="19" fill="#c4802a" stroke="#10965a" stroke-width="1"/><rect x="793.5" y="310.5" width="21" height="19" fill="#fdba31" stroke="#10965a" stroke-width="1"/><rect x="822.5" y="310.5" width="21" height="19" fill="#35d3a7" stroke="#10965a" stroke-width="1"/><rect x="850.5" y="310.5" width="21" height="19" fill="#c4802a" stroke="#10965a" stroke-width="1"/><rect x="879.5" y="310.5" width="21" height="19" fill="#ff8829" stroke="#10965a" stroke-width="1"/><rect x="908.5" y="310.5" width="21" height="19" fill="#c4802a" stroke="#10965a" stroke-width="1"/><rect x="936.5" y="310.5" width="21" height="19" fill="#c4802a" stroke="#10965a" stroke-width="1"/><rect x="965.5" y="310.5" width="21" height="19" fill="#ff8829" stroke="#10965a" stroke-width="1"/><rect x="1022.5" y="310.5" width="21" height="19" fill="#c4802a" stroke="#10965a" stroke-width="1"/><rect x="1051.5" y="310.5" width="21" height="19" fill="#c4802a" stroke="#10965a" stroke-width="1"/><rect x="1080.5" y="310.5" width="21" height="19" fill="#c4802a" stroke="#10965a" stroke-width="1"/><rect x="1108.5" y="310.5" width="21" height="19" fill="#c4802a" stroke="#10965a" stroke-width="1"/><rect x="1137.5" y="310.5" width="21" height="19" fill="#c4802a" stroke="#10965a" stroke-width="1"/><rect x="1166.5" y="310.5" width="21" height="19" fill="#fdba31" stroke="#10965a" stroke-width="1"/><rect x="1194.5" y="310.5" width="21" height="19" fill="#c4802a" stroke="#10965a" stroke-width="1"/><rect x="1223.5" y="310.5" width="21" height="19" fill="#c4802a" stroke="#10965a" stroke-width="1"/><rect x="1252.5" y="310.5" width="21" height="19" fill="#fdba31" stroke="#10965a" stroke-width="1"/><rect x="1309.5" y="310.5" width="21" height="19" fill="#c4802a" stroke="#10965a" stroke-width="1"/><rect x="1338.5" y="310.5" width="21" height="19" fill="#c4802a" stroke="#10965a" stroke-width="1"/><rect x="1395.5" y="310.5" width="21" height="19" fill="#c4802a" stroke="#10965a" stroke-width="1"/><rect x="1424.5" y="310.5" width="21" height="19" fill="#c4802a" stroke="#10965a" stroke-width="1"/><rect x="1453.5" y="310.5" width="21" height="19" fill="#c4802a" stroke="#10965a" stroke-width="1"/><rect x="1510.5" y="310.5" width="21" height="19" fill="#fdba31" stroke="#10965a" stroke-width="1"/><rect x="1596.5" y="310.5" width="21" height="19" fill="#c4802a" stroke="#10965a" stroke-width="1"/><rect x="1625.5" y="310.5" width="21" height="19" fill="#c4802a" stroke="#10965a" stroke-width="1"/><rect x="1653.5" y="310.5" width="21" height="19" fill="#fdba31" stroke="#10965a" stroke-width="1"/><rect x="1682.5" y="310.5" width="21" height="19" fill="#c4802a" stroke="#10965a" stroke-width="1"/><rect x="133.5" y="335.5" width="21" height="19" fill="#fdba31" stroke="#10965a" stroke-width="1"/><rect x="162.5" y="335.5" width="21" height="19" fill="#fdba31" stroke="#10965a" stroke-width="1"/><rect x="191.5" y="335.5" width="21" height="19" fill="#fdba31" stroke="#10965a" stroke-width="1"/><rect x="219.5" y="335.5" width="21" height="19" fill="#35d3a7" stroke="#10965a" stroke-width="1"/><rect x="248.5" y="335.5" width="21" height="19" fill="#c4802a" stroke="#10965a" stroke-width="1"/><rect x="305.5" y="335.5" width="21" height="19" fill="#fdba31" stroke="#10965a" stroke-width="1"/><rect x="334.5" y="335.5" width="21" height="19" fill="#c4802a" stroke="#10965a" stroke-width="1"/><rect x="363.5" y="335.5" width="21" height="19" fill="#c4802a" stroke="#10965a" stroke-width="1"/><rect x="391.5" y="335.5" width="21" height="19" fill="#fdba31" stroke="#10965a" stroke-width="1"/><rect x="420.5" y="335.5" width="21" height="19" fill="#c4802a" stroke="#10965a" stroke-width="1"/><rect x="449.5" y="335.5" width="21" height="19" fill="#fdba31" stroke="#10965a" stroke-width="1"/><rect x="477.5" y="335.5" width="21" height="19" fill="#ff8829" stroke="#10965a" stroke-width="1"/><rect x="535.5" y="335.5" width="21" height="19" fill="#35d3a7" stroke="#10965a" stroke-width="1"/><rect x="563.5" y="335.5" width="21" height="19" fill="#fdba31" stroke="#10965a" stroke-width="1"/><rect x="592.5" y="335.5" width="21" height="19" fill="#a8c6fa" stroke="#10965a" stroke-width="1"/><rect x="621.5" y="335.5" width="21" height="19" fill="#fdba31" stroke="#10965a" stroke-width="1"/><rect x="650.5" y="335.5" width="21" height="19" fill="#fdba31" stroke="#10965a" stroke-width="1"/><rect x="678.5" y="335.5" width="21" height="19" fill="#fdba31" stroke="#10965a" stroke-width="1"/><rect x="707.5" y="335.5" width="21" height="19" fill="#ff8829" stroke="#10965a" stroke-width="1"/><rect x="736.5" y="335.5" width="21" height="19" fill="#fdba31" stroke="#10965a" stroke-width="1"/><rect x="764.5" y="335.5" width="21" height="19" fill="#35d3a7" stroke="#10965a" stroke-width="1"/><rect x="793.5" y="335.5" width="21" height="19" fill="#35d3a7" stroke="#10965a" stroke-width="1"/><rect x="822.5" y="335.5" width="21" height="19" fill="#d5f38b" stroke="#10965a" stroke-width="1"/><rect x="850.5" y="335.5" width="21" height="19" fill="#fdba31" stroke="#10965a" stroke-width="1"/><rect x="879.5" y="335.5" width="21" height="19" fill="#c4802a" stroke="#10965a" stroke-width="1"/><rect x="908.5" y="335.5" width="21" height="19" fill="#ff8829" stroke="#10965a" stroke-width="1"/><rect x="936.5" y="335.5" width="21" height="19" fill="#ff8829" stroke="#10965a" stroke-width="1"/><rect x="965.5" y="335.5" width="21" height="19" fill="#c4802a" stroke="#10965a" stroke-width="1"/><rect x="1022.5" y="335.5" width="21" height="19" fill="#fdba31" stroke="#10965a" stroke-width="1"/><rect x="1051.5" y="335.5" width="21" height="19" fill="#c4802a" stroke="#10965a" stroke-width="1"/><rect x="1080.5" y="335.5" width="21" height="19" fill="#fdba31" stroke="#10965a" stroke-width="1"/><rect x="1108.5" y="335.5" width="21" height="19" fill="#35d3a7" stroke="#10965a" stroke-width="1"/><rect x="1137.5" y="335.5" width="21" height="19" fill="#35d3a7" stroke="#10965a" stroke-width="1"/><rect x="1166.5" y="335.5" width="21" height="19" fill="#fdba31" stroke="#10965a" stroke-width="1"/><rect x="1194.5" y="335.5" width="21" height="19" fill="#fdba31" stroke="#10965a" stroke-width="1"/><rect x="1223.5" y="335.5" width="21" height="19" fill="#c4802a" stroke="#10965a" stroke-width="1"/><rect x="1252.5" y="335.5" width="21" height="19" fill="#fdba31" stroke="#10965a" stroke-width="1"/><rect x="1309.5" y="335.5" width="21" height="19" fill="#fdba31" stroke="#10965a" stroke-width="1"/><rect x="1338.5" y="335.5" width="21" height="19" fill="#c4802a" stroke="#10965a" stroke-width="1"/><rect x="1367.5" y="335.5" width="21" height="19" fill="#fdba31" stroke="#10965a" stroke-width="1"/><rect x="1395.5" y="335.5" width="21" height="19" fill="#fdba31" stroke="#10965a" stroke-width="1"/><rect x="1424.5" y="335.5" width="21" height="19" fill="#c4802a" stroke="#10965a" stroke-width="1"/><rect x="1453.5" y="335.5" width="21" height="19" fill="#c4802a" stroke="#10965a" stroke-width="1"/><rect x="1510.5" y="335.5" width="21" height="19" fill="#c4802a" stroke="#10965a" stroke-width="1"/><rect x="1539.5" y="335.5" width="21" height="19" fill="#c4802a" stroke="#10965a" stroke-width="1"/><rect x="1567.5" y="335.5" width="21" height="19" fill="#c4802a" stroke="#10965a" stroke-width="1"/><rect x="1596.5" y="335.5" width="21" height="19" fill="#ff8829" stroke="#10965a" stroke-width="1"/><rect x="1625.5" y="335.5" width="21" height="19" fill="#c4802a" stroke="#10965a" stroke-width="1"/><rect x="1653.5" y="335.5" width="21" height="19" fill="#35d3a7" stroke="#10965a" stroke-width="1"/><rect x="1682.5" y="335.5" width="21" height="19" fill="#c4802a" stroke="#10965a" stroke-width="1"/><rect x="1711.5" y="335.5" width="21" height="19" fill="#fdba31" stroke="#10965a" stroke-width="1"/><rect x="133.5" y="360.5" width="21" height="19" fill="#fdba31" stroke="#10965a" stroke-width="1"/><rect x="162.5" y="360.5" width="21" height="19" fill="#c4802a" stroke="#10965a" stroke-width="1"/><rect x="191.5" y="360.5" width="21" height="19" fill="#c4802a" stroke="#10965a" stroke-width="1"/><rect x="219.5" y="360.5" width="21" height="19" fill="#fdba31" stroke="#10965a" stroke-width="1"/><rect x="248.5" y="360.5" width="21" height="19" fill="#c4802a" stroke="#10965a" stroke-width="1"/><rect x="277.5" y="360.5" width="21" height="19" fill="#fdba31" stroke="#10965a" stroke-width="1"/><rect x="305.5" y="360.5" width="21" height="19" fill="#ff8829" stroke="#10965a" stroke-width="1"/><rect x="334.5" y="360.5" width="21" height="19" fill="#fdba31" stroke="#10965a" stroke-width="1"/><rect x="363.5" y="360.5" width="21" height="19" fill="#c4802a" stroke="#10965a" stroke-width="1"/><rect x="391.5" y="360.5" width="21" height="19" fill="#fdba31" stroke="#10965a" stroke-width="1"/><rect x="420.5" y="360.5" width="21" height="19" fill="#35d3a7" stroke="#10965a" stroke-width="1"/><rect x="449.5" y="360.5" width="21" height="19" fill="#c4802a" stroke="#10965a" stroke-width="1"/><rect x="477.5" y="360.5" width="21" height="19" fill="#ff8829" stroke="#10965a" stroke-width="1"/><rect x="506.5" y="360.5" width="21" height="19" fill="#fdba31" stroke="#10965a" stroke-width="1"/><rect x="535.5" y="360.5" width="21" height="19" fill="#fdba31" stroke="#10965a" stroke-width="1"/><rect x="563.5" y="360.5" width="21" height="19" fill="#35d3a7" stroke="#10965a" stroke-width="1"/><rect x="592.5" y="360.5" width="21" height="19" fill="#c4802a" stroke="#10965a" stroke-width="1"/><rect x="621.5" y="360.5" width="21" height="19" fill="#c4802a" stroke="#10965a" stroke-width="1"/><rect x="650.5" y="360.5" width="21" height="19" fill="#fdba31" stroke="#10965a" stroke-width="1"/><rect x="678.5" y="360.5" width="21" height="19" fill="#c4802a" stroke="#10965a" stroke-width="1"/><rect x="707.5" y="360.5" width="21" height="19" fill="#fdba31" stroke="#10965a" stroke-width="1"/><rect x="736.5" y="360.5" width="21" height="19" fill="#c4802a" stroke="#10965a" stroke-width="1"/><rect x="764.5" y="360.5" width="21" height="19" fill="#c4802a" stroke="#10965a" stroke-width="1"/><rect x="793.5" y="360.5" width="21" height="19" fill="#ff8829" stroke="#10965a" stroke-width="1"/><rect x="822.5" y="360.5" width="21" height="19" fill="#fdba31" stroke="#10965a" stroke-width="1"/><rect x="850.5" y="360.5" width="21" height="19" fill="#fdba31" stroke="#10965a" stroke-width="1"/><rect x="879.5" y="360.5" width="21" height="19" fill="#fdba31" stroke="#10965a" stroke-width="1"/><rect x="908.5" y="360.5" width="21" height="19" fill="#c4802a" stroke="#10965a" stroke-width="1"/><rect x="936.5" y="360.5" width="21" height="19" fill="#fdba31" stroke="#10965a" stroke-width="1"/><rect x="965.5" y="360.5" width="21" height="19" fill="#fdba31" stroke="#10965a" stroke-width="1"/><rect x="994.5" y="360.5" width="21" height="19" fill="#c4802a" stroke="#10965a" stroke-width="1"/><rect x="1022.5" y="360.5" width="21" height="19" fill="#c4802a" stroke="#10965a" stroke-width="1"/><rect x="1051.5" y="360.5" width="21" height="19" fill="#fdba31" stroke="#10965a" stroke-width="1"/><rect x="1080.5" y="360.5" width="21" height="19" fill="#c4802a" stroke="#10965a" stroke-width="1"/><rect x="1108.5" y="360.5" width="21" height="19" fill="#c4802a" stroke="#10965a" stroke-width="1"/><rect x="1137.5" y="360.5" width="21" height="19" fill="#fdba31" stroke="#10965a" stroke-width="1"/><rect x="1166.5" y="360.5" width="21" height="19" fill="#ff8829" stroke="#10965a" stroke-width="1"/><rect x="1194.5" y="360.5" width="21" height="19" fill="#fdba31" stroke="#10965a" stroke-width="1"/><rect x="1223.5" y="360.5" width="21" height="19" fill="#c4802a" stroke="#10965a" stroke-width="1"/><rect x="1252.5" y="360.5" width="21" height="19" fill="#fdba31" stroke="#10965a" stroke-width="1"/><rect x="1309.5" y="360.5" width="21" height="19" fill="#c4802a" stroke="#10965a" stroke-width="1"/><rect x="1338.5" y="360.5" width="21" height="19" fill="#fdba31" stroke="#10965a" stroke-width="1"/><rect x="1367.5" y="360.5" width="21" height="19" fill="#fdba31" stroke="#10965a" stroke-width="1"/><rect x="1395.5" y="360.5" width="21" height="19" fill="#ff8829" stroke="#10965a" stroke-width="1"/><rect x="1424.5" y="360.5" width="21" height="19" fill="#c4802a" stroke="#10965a" stroke-width="1"/><rect x="1453.5" y="360.5" width="21" height="19" fill="#35d3a7" stroke="#10965a" stroke-width="1"/><rect x="1510.5" y="360.5" width="21" height="19" fill="#35d3a7" stroke="#10965a" stroke-width="1"/><rect x="1539.5" y="360.5" width="21" height="19" fill="#c4802a" stroke="#10965a" stroke-width="1"/><rect x="1567.5" y="360.5" width="21" height="19" fill="#fdba31" stroke="#10965a" stroke-width="1"/><rect x="1596.5" y="360.5" width="21" height="19" fill="#fdba31" stroke="#10965a" stroke-width="1"/><rect x="1625.5" y="360.5" width="21" height="19" fill="#fdba31" stroke="#10965a" stroke-width="1"/><rect x="1653.5" y="360.5" width="21" height="19" fill="#c4802a" stroke="#10965a" stroke-width="1"/><rect x="1682.5" y="360.5" width="21" height="19" fill="#fdba31" stroke="#10965a" stroke-width="1"/><rect x="1711.5" y="360.5" width="21" height="19" fill="#c4802a" stroke="#10965a" stroke-width="1"/><rect x="133.5" y="385.5" width="21" height="19" fill="#fdba31" stroke="#10965a" stroke-width="1"/><rect x="162.5" y="385.5" width="21" height="19" fill="#fdba31" stroke="#10965a" stroke-width="1"/><rect x="191.5" y="385.5" width="21" height="19" fill="#ff8829" stroke="#10965a" stroke-width="1"/><rect x="219.5" y="385.5" width="21" height="19" fill="#ff8829" stroke="#10965a" stroke-width="1"/><rect x="248.5" y="385.5" width="21" height="19" fill="#fdba31" stroke="#10965a" stroke-width="1"/><rect x="277.5" y="385.5" width="21" height="19" fill="#35d3a7" stroke="#10965a" stroke-width="1"/><rect x="305.5" y="385.5" width="21" height="19" fill="#fdba31" stroke="#10965a" stroke-width="1"/><rect x="334.5" y="385.5" width="21" height="19" fill="#fdba31" stroke="#10965a" stroke-width="1"/><rect x="363.5" y="385.5" width="21" height="19" fill="#fdba31" stroke="#10965a" stroke-width="1"/><rect x="391.5" y="385.5" width="21" height="19" fill="#c4802a" stroke="#10965a" stroke-width="1"/><rect x="420.5" y="385.5" width="21" height="19" fill="#fdba31" stroke="#10965a" stroke-width="1"/><rect x="449.5" y="385.5" width="21" height="19" fill="#c4802a" stroke="#10965a" stroke-width="1"/><rect x="477.5" y="385.5" width="21" height="19" fill="#c4802a" stroke="#10965a" stroke-width="1"/><rect x="506.5" y="385.5" width="21" height="19" fill="#fdba31" stroke="#10965a" stroke-width="1"/><rect x="535.5" y="385.5" width="21" height="19" fill="#fdba31" stroke="#10965a" stroke-width="1"/><rect x="563.5" y="385.5" width="21" height="19" fill="#35d3a7" stroke="#10965a" stroke-width="1"/><rect x="592.5" y="385.5" width="21" height="19" fill="#ff8829" stroke="#10965a" stroke-width="1"/><rect x="621.5" y="385.5" width="21" height="19" fill="#fdba31" stroke="#10965a" stroke-width="1"/><rect x="650.5" y="385.5" width="21" height="19" fill="#c4802a" stroke="#10965a" stroke-width="1"/><rect x="678.5" y="385.5" width="21" height="19" fill="#ff8829" stroke="#10965a" stroke-width="1"/><rect x="707.5" y="385.5" width="21" height="19" fill="#ff8829" stroke="#10965a" stroke-width="1"/><rect x="736.5" y="385.5" width="21" height="19" fill="#c4802a" stroke="#10965a" stroke-width="1"/><rect x="764.5" y="385.5" width="21" height="19" fill="#c4802a" stroke="#10965a" stroke-width="1"/><rect x="793.5" y="385.5" width="21" height="19" fill="#fdba31" stroke="#10965a" stroke-width="1"/><rect x="822.5" y="385.5" width="21" height="19" fill="#fdba31" stroke="#10965a" stroke-width="1"/><rect x="850.5" y="385.5" width="21" height="19" fill="#fdba31" stroke="#10965a" stroke-width="1"/><rect x="879.5" y="385.5" width="21" height="19" fill="#fdba31" stroke="#10965a" stroke-width="1"/><rect x="908.5" y="385.5" width="21" height="19" fill="#fdba31" stroke="#10965a" stroke-width="1"/><rect x="936.5" y="385.5" width="21" height="19" fill="#c4802a" stroke="#10965a" stroke-width="1"/><rect x="965.5" y="385.5" width="21" height="19" fill="#fdba31" stroke="#10965a" stroke-width="1"/><rect x="994.5" y="385.5" width="21" height="19" fill="#d5f38b" stroke="#10965a" stroke-width="1"/><rect x="1022.5" y="385.5" width="21" height="19" fill="#35d3a7" stroke="#10965a" stroke-width="1"/><rect x="1051.5" y="385.5" width="21" height="19" fill="#c4802a" stroke="#10965a" stroke-width="1"/><rect x="1080.5" y="385.5" width="21" height="19" fill="#c4802a" stroke="#10965a" stroke-width="1"/><rect x="1108.5" y="385.5" width="21" height="19" fill="#fdba31" stroke="#10965a" stroke-width="1"/><rect x="1137.5" y="385.5" width="21" height="19" fill="#c4802a" stroke="#10965a" stroke-width="1"/><rect x="1166.5" y="385.5" width="21" height="19" fill="#c4802a" stroke="#10965a" stroke-width="1"/><rect x="1194.5" y="385.5" width="21" height="19" fill="#c4802a" stroke="#10965a" stroke-width="1"/><rect x="1223.5" y="385.5" width="21" height="19" fill="#35d3a7" stroke="#10965a" stroke-width="1"/><rect x="1252.5" y="385.5" width="21" height="19" fill="#c4802a" stroke="#10965a" stroke-width="1"/><rect x="1281.5" y="385.5" width="21" height="19" fill="#fdba31" stroke="#10965a" stroke-width="1"/><rect x="1309.5" y="385.5" width="21" height="19" fill="#fdba31" stroke="#10965a" stroke-width="1"/><rect x="1338.5" y="385.5" width="21" height="19" fill="#fdba31" stroke="#10965a" stroke-width="1"/><rect x="1367.5" y="385.5" width="21" height="19" fill="#ff8829" stroke="#10965a" stroke-width="1"/><rect x="1395.5" y="385.5" width="21" height="19" fill="#fdba31" stroke="#10965a" stroke-width="1"/><rect x="1424.5" y="385.5" width="21" height="19" fill="#fdba31" stroke="#10965a" stroke-width="1"/><rect x="1453.5" y="385.5" width="21" height="19" fill="#c4802a" stroke="#10965a" stroke-width="1"/><rect x="1481.5" y="385.5" width="21" height="19" fill="#c4802a" stroke="#10965a" stroke-width="1"/><rect x="1510.5" y="385.5" width="21" height="19" fill="#fdba31" stroke="#10965a" stroke-width="1"/><rect x="1539.5" y="385.5" width="21" height="19" fill="#c4802a" stroke="#10965a" stroke-width="1"/><rect x="1567.5" y="385.5" width="21" height="19" fill="#c4802a" stroke="#10965a" stroke-width="1"/><rect x="1596.5" y="385.5" width="21" height="19" fill="#fdba31" stroke="#10965a" stroke-width="1"/><rect x="1625.5" y="385.5" width="21" height="19" fill="#c4802a" stroke="#10965a" stroke-width="1"/><rect x="1653.5" y="385.5" width="21" height="19" fill="#fdba31" stroke="#10965a" stroke-width="1"/><rect x="1682.5" y="385.5" width="21" height="19" fill="#fdba31" stroke="#10965a" stroke-width="1"/><rect x="1711.5" y="385.5" width="21" height="19" fill="#c4802a" stroke="#10965a" stroke-width="1"/><rect x="133.5" y="410.5" width="21" height="19" fill="#ff8829" stroke="#10965a" stroke-width="1"/><rect x="162.5" y="410.5" width="21" height="19" fill="#c4802a" stroke="#10965a" stroke-width="1"/><rect x="191.5" y="410.5" width="21" height="19" fill="#fdba31" stroke="#10965a" stroke-width="1"/><rect x="219.5" y="410.5" width="21" height="19" fill="#ff8829" stroke="#10965a" stroke-width="1"/><rect x="248.5" y="410.5" width="21" height="19" fill="#fdba31" stroke="#10965a" stroke-width="1"/><rect x="277.5" y="410.5" width="21" height="19" fill="#ff8829" stroke="#10965a" stroke-width="1"/><rect x="305.5" y="410.5" width="21" height="19" fill="#c4802a" stroke="#10965a" stroke-width="1"/><rect x="334.5" y="410.5" width="21" height="19" fill="#fdba31" stroke="#10965a" stroke-width="1"/><rect x="363.5" y="410.5" width="21" height="19" fill="#fdba31" stroke="#10965a" stroke-width="1"/><rect x="391.5" y="410.5" width="21" height="19" fill="#c4802a" stroke="#10965a" stroke-width="1"/><rect x="420.5" y="410.5" width="21" height="19" fill="#c4802a" stroke="#10965a" stroke-width="1"/><rect x="449.5" y="410.5" width="21" height="19" fill="#c4802a" stroke="#10965a" stroke-width="1"/><rect x="477.5" y="410.5" width="21" height="19" fill="#fdba31" stroke="#10965a" stroke-width="1"/><rect x="506.5" y="410.5" width="21" height="19" fill="#35d3a7" stroke="#10965a" stroke-width="1"/><rect x="535.5" y="410.5" width="21" height="19" fill="#c4802a" stroke="#10965a" stroke-width="1"/><rect x="563.5" y="410.5" width="21" height="19" fill="#35d3a7" stroke="#10965a" stroke-width="1"/><rect x="592.5" y="410.5" width="21" height="19" fill="#ff8829" stroke="#10965a" stroke-width="1"/><rect x="621.5" y="410.5" width="21" height="19" fill="#c4802a" stroke="#10965a" stroke-width="1"/><rect x="650.5" y="410.5" width="21" height="19" fill="#fdba31" stroke="#10965a" stroke-width="1"/><rect x="678.5" y="410.5" width="21" height="19" fill="#fdba31" stroke="#10965a" stroke-width="1"/><rect x="707.5" y="410.5" width="21" height="19" fill="#d5f38b" stroke="#10965a" stroke-width="1"/><rect x="736.5" y="410.5" width="21" height="19" fill="#fdba31" stroke="#10965a" stroke-width="1"/><rect x="764.5" y="410.5" width="21" height="19" fill="#fdba31" stroke="#10965a" stroke-width="1"/><rect x="793.5" y="410.5" width="21" height="19" fill="#fdba31" stroke="#10965a" stroke-width="1"/><rect x="822.5" y="410.5" width="21" height="19" fill="#35d3a7" stroke="#10965a" stroke-width="1"/><rect x="850.5" y="410.5" width="21" height="19" fill="#fdba31" stroke="#10965a" stroke-width="1"/><rect x="879.5" y="410.5" width="21" height="19" fill="#c4802a" stroke="#10965a" stroke-width="1"/><rect x="908.5" y="410.5" width="21" height="19" fill="#c4802a" stroke="#10965a" stroke-width="1"/><rect x="936.5" y="410.5" width="21" height="19" fill="#c4802a" stroke="#10965a" stroke-width="1"/><rect x="965.5" y="410.5" width="21" height="19" fill="#ff8829" stroke="#10965a" stroke-width="1"/><rect x="994.5" y="410.5" width="21" height="19" fill="#fdba31" stroke="#10965a" stroke-width="1"/><rect x="1022.5" y="410.5" width="21" height="19" fill="#fdba31" stroke="#10965a" stroke-width="1"/><rect x="1051.5" y="410.5" width="21" height="19" fill="#35d3a7" stroke="#10965a" stroke-width="1"/><rect x="1080.5" y="410.5" width="21" height="19" fill="#c4802a" stroke="#10965a" stroke-width="1"/><rect x="1108.5" y="410.5" width="21" height="19" fill="#c4802a" stroke="#10965a" stroke-width="1"/><rect x="1137.5" y="410.5" width="21" height="19" fill="#35d3a7" stroke="#10965a" stroke-width="1"/><rect x="1166.5" y="410.5" width="21" height="19" fill="#fdba31" stroke="#10965a" stroke-width="1"/><rect x="1194.5" y="410.5" width="21" height="19" fill="#d5f38b" stroke="#10965a" stroke-width="1"/><rect x="1223.5" y="410.5" width="21" height="19" fill="#c4802a" stroke="#10965a" stroke-width="1"/><rect x="1252.5" y="410.5" width="21" height="19" fill="#c4802a" stroke="#10965a" stroke-width="1"/><rect x="1281.5" y="410.5" width="21" height="19" fill="#fdba31" stroke="#10965a" stroke-width="1"/><rect x="1309.5" y="410.5" width="21" height="19" fill="#fdba31" stroke="#10965a" stroke-width="1"/><rect x="1338.5" y="410.5" width="21" height="19" fill="#35d3a7" stroke="#10965a" stroke-width="1"/><rect x="1367.5" y="410.5" width="21" height="19" fill="#ff8829" stroke="#10965a" stroke-width="1"/><rect x="1395.5" y="410.5" width="21" height="19" fill="#2757b5" stroke="#10965a" stroke-width="1"/><rect x="1424.5" y="410.5" width="21" height="19" fill="#c4802a" stroke="#10965a" stroke-width="1"/><rect x="1453.5" y="410.5" width="21" height="19" fill="#c4802a" stroke="#10965a" stroke-width="1"/><rect x="1481.5" y="410.5" width="21" height="19" fill="#fdba31" stroke="#10965a" stroke-width="1"/><rect x="1510.5" y="410.5" width="21" height="19" fill="#ff8829" stroke="#10965a" stroke-width="1"/><rect x="1539.5" y="410.5" width="21" height="19" fill="#c4802a" stroke="#10965a" stroke-width="1"/><rect x="1567.5" y="410.5" width="21" height="19" fill="#ff8829" stroke="#10965a" stroke-width="1"/><rect x="1596.5" y="410.5" width="21" height="19" fill="#fdba31" stroke="#10965a" stroke-width="1"/><rect x="1625.5" y="410.5" width="21" height="19" fill="#c4802a" stroke="#10965a" stroke-width="1"/><rect x="1653.5" y="410.5" width="21" height="19" fill="#fdba31" stroke="#10965a" stroke-width="1"/><rect x="1682.5" y="410.5" width="21" height="19" fill="#fdba31" stroke="#10965a" stroke-width="1"/><rect x="1711.5" y="410.5" width="21" height="19" fill="#fdba31" stroke="#10965a" stroke-width="1"/><rect x="133.5" y="435.5" width="21" height="19" fill="#fdba31" stroke="#10965a" stroke-width="1"/><rect x="162.5" y="435.5" width="21" height="19" fill="#c4802a" stroke="#10965a" stroke-width="1"/><rect x="191.5" y="435.5" width="21" height="19" fill="#c4802a" stroke="#10965a" stroke-width="1"/><rect x="219.5" y="435.5" width="21" height="19" fill="#c4802a" stroke="#10965a" stroke-width="1"/><rect x="248.5" y="435.5" width="21" height="19" fill="#c4802a" stroke="#10965a" stroke-width="1"/><rect x="277.5" y="435.5" width="21" height="19" fill="#c4802a" stroke="#10965a" stroke-width="1"/><rect x="305.5" y="435.5" width="21" height="19" fill="#c4802a" stroke="#10965a" stroke-width="1"/><rect x="334.5" y="435.5" width="21" height="19" fill="#fdba31" stroke="#10965a" stroke-width="1"/><rect x="363.5" y="435.5" width="21" height="19" fill="#ff8829" stroke="#10965a" stroke-width="1"/><rect x="391.5" y="435.5" width="21" height="19" fill="#c4802a" stroke="#10965a" stroke-width="1"/><rect x="420.5" y="435.5" width="21" height="19" fill="#fdba31" stroke="#10965a" stroke-width="1"/><rect x="449.5" y="435.5" width="21" height="19" fill="#fdba31" stroke="#10965a" stroke-width="1"/><rect x="477.5" y="435.5" width="21" height="19" fill="#c4802a" stroke="#10965a" stroke-width="1"/><rect x="506.5" y="435.5" width="21" height="19" fill="#c4802a" stroke="#10965a" stroke-width="1"/><rect x="535.5" y="435.5" width="21" height="19" fill="#c4802a" stroke="#10965a" stroke-width="1"/><rect x="563.5" y="435.5" width="21" height="19" fill="#c4802a" stroke="#10965a" stroke-width="1"/><rect x="592.5" y="435.5" width="21" height="19" fill="#c4802a" stroke="#10965a" stroke-width="1"/><rect x="621.5" y="435.5" width="21" height="19" fill="#fdba31" stroke="#10965a" stroke-width="1"/><rect x="650.5" y="435.5" width="21" height="19" fill="#c4802a" stroke="#10965a" stroke-width="1"/><rect x="678.5" y="435.5" width="21" height="19" fill="#c4802a" stroke="#10965a" stroke-width="1"/><rect x="707.5" y="435.5" width="21" height="19" fill="#c4802a" stroke="#10965a" stroke-width="1"/><rect x="736.5" y="435.5" width="21" height="19" fill="#c4802a" stroke="#10965a" stroke-width="1"/><rect x="764.5" y="435.5" width="21" height="19" fill="#fdba31" stroke="#10965a" stroke-width="1"/><rect x="793.5" y="435.5" width="21" height="19" fill="#c4802a" stroke="#10965a" stroke-width="1"/><rect x="822.5" y="435.5" width="21" height="19" fill="#35d3a7" stroke="#10965a" stroke-width="1"/><rect x="850.5" y="435.5" width="21" height="19" fill="#c4802a" stroke="#10965a" stroke-width="1"/><rect x="879.5" y="435.5" width="21" height="19" fill="#fdba31" stroke="#10965a" stroke-width="1"/><rect x="908.5" y="435.5" width="21" height="19" fill="#c4802a" stroke="#10965a" stroke-width="1"/><rect x="936.5" y="435.5" width="21" height="19" fill="#c4802a" stroke="#10965a" stroke-width="1"/><rect x="965.5" y="435.5" width="21" height="19" fill="#fdba31" stroke="#10965a" stroke-width="1"/><rect x="994.5" y="435.5" width="21" height="19" fill="#c4802a" stroke="#10965a" stroke-width="1"/><rect x="1022.5" y="435.5" width="21" height="19" fill="#c4802a" stroke="#10965a" stroke-width="1"/><rect x="1051.5" y="435.5" width="21" height="19" fill="#35d3a7" stroke="#10965a" stroke-width="1"/><rect x="1080.5" y="435.5" width="21" height="19" fill="#fdba31" stroke="#10965a" stroke-width="1"/><rect x="1108.5" y="435.5" width="21" height="19" fill="#c4802a" stroke="#10965a" stroke-width="1"/><rect x="1137.5" y="435.5" width="21" height="19" fill="#c4802a" stroke="#10965a" stroke-width="1"/><rect x="1166.5" y="435.5" width="21" height="19" fill="#fdba31" stroke="#10965a" stroke-width="1"/><rect x="1194.5" y="435.5" width="21" height="19" fill="#c4802a" stroke="#10965a" stroke-width="1"/><rect x="1223.5" y="435.5" width="21" height="19" fill="#fdba31" stroke="#10965a" stroke-width="1"/><rect x="1252.5" y="435.5" width="21" height="19" fill="#d5f38b" stroke="#10965a" stroke-width="1"/><rect x="1281.5" y="435.5" width="21" height="19" fill="#c4802a" stroke="#10965a" stroke-width="1"/><rect x="1309.5" y="435.5" width="21" height="19" fill="#c4802a" stroke="#10965a" stroke-width="1"/><rect x="1338.5" y="435.5" width="21" height="19" fill="#fdba31" stroke="#10965a" stroke-width="1"/><rect x="1367.5" y="435.5" width="21" height="19" fill="#c4802a" stroke="#10965a" stroke-width="1"/><rect x="1395.5" y="435.5" width="21" height="19" fill="#35d3a7" stroke="#10965a" stroke-width="1"/><rect x="1424.5" y="435.5" width="21" height="19" fill="#c4802a" stroke="#10965a" stroke-width="1"/><rect x="1453.5" y="435.5" width="21" height="19" fill="#fdba31" stroke="#10965a" stroke-width="1"/><rect x="1481.5" y="435.5" width="21" height="19" fill="#c4802a" stroke="#10965a" stroke-width="1"/><rect x="1510.5" y="435.5" width="21" height="19" fill="#c4802a" stroke="#10965a" stroke-width="1"/><rect x="1539.5" y="435.5" width="21" height="19" fill="#c4802a" stroke="#10965a" stroke-width="1"/><rect x="1567.5" y="435.5" width="21" height="19" fill="#fdba31" stroke="#10965a" stroke-width="1"/><rect x="1596.5" y="435.5" width="21" height="19" fill="#c4802a" stroke="#10965a" stroke-width="1"/><rect x="1625.5" y="435.5" width="21" height="19" fill="#fdba31" stroke="#10965a" stroke-width="1"/><rect x="1653.5" y="435.5" width="21" height="19" fill="#fdba31" stroke="#10965a" stroke-width="1"/><rect x="1682.5" y="435.5" width="21" height="19" fill="#35d3a7" stroke="#10965a" stroke-width="1"/><rect x="1711.5" y="435.5" width="21" height="19" fill="#c4802a" stroke="#10965a" stroke-width="1"/><rect x="133.5" y="460.5" width="21" height="19" fill="#c4802a" stroke="#10965a" stroke-width="1"/><rect x="162.5" y="460.5" width="21" height="19" fill="#c4802a" stroke="#10965a" stroke-width="1"/><rect x="191.5" y="460.5" width="21" height="19" fill="#2757b5" stroke="#10965a" stroke-width="1"/><rect x="219.5" y="460.5" width="21" height="19" fill="#fdba31" stroke="#10965a" stroke-width="1"/><rect x="248.5" y="460.5" width="21" height="19" fill="#35d3a7" stroke="#10965a" stroke-width="1"/><rect x="277.5" y="460.5" width="21" height="19" fill="#c4802a" stroke="#10965a" stroke-width="1"/><rect x="305.5" y="460.5" width="21" height="19" fill="#fdba31" stroke="#10965a" stroke-width="1"/><rect x="334.5" y="460.5" width="21" height="19" fill="#fdba31" stroke="#10965a" stroke-width="1"/><rect x="363.5" y="460.5" width="21" height="19" fill="#c4802a" stroke="#10965a" stroke-width="1"/><rect x="391.5" y="460.5" width="21" height="19" fill="#fdba31" stroke="#10965a" stroke-width="1"/><rect x="420.5" y="460.5" width="21" height="19" fill="#fdba31" stroke="#10965a" stroke-width="1"/><rect x="449.5" y="460.5" width="21" height="19" fill="#35d3a7" stroke="#10965a" stroke-width="1"/><rect x="477.5" y="460.5" width="21" height="19" fill="#c4802a" stroke="#10965a" stroke-width="1"/><rect x="506.5" y="460.5" width="21" height="19" fill="#fdba31" stroke="#10965a" stroke-width="1"/><rect x="535.5" y="460.5" width="21" height="19" fill="#ff8829" stroke="#10965a" stroke-width="1"/><rect x="563.5" y="460.5" width="21" height="19" fill="#c4802a" stroke="#10965a" stroke-width="1"/><rect x="592.5" y="460.5" width="21" height="19" fill="#fdba31" stroke="#10965a" stroke-width="1"/><rect x="621.5" y="460.5" width="21" height="19" fill="#ff8829" stroke="#10965a" stroke-width="1"/><rect x="650.5" y="460.5" width="21" height="19" fill="#fdba31" stroke="#10965a" stroke-width="1"/><rect x="678.5" y="460.5" width="21" height="19" fill="#c4802a" stroke="#10965a" stroke-width="1"/><rect x="707.5" y="460.5" width="21" height="19" fill="#c4802a" stroke="#10965a" stroke-width="1"/><rect x="736.5" y="460.5" width="21" height="19" fill="#35d3a7" stroke="#10965a" stroke-width="1"/><rect x="764.5" y="460.5" width="21" height="19" fill="#c4802a" stroke="#10965a" stroke-width="1"/><rect x="793.5" y="460.5" width="21" height="19" fill="#fdba31" stroke="#10965a" stroke-width="1"/><rect x="822.5" y="460.5" width="21" height="19" fill="#c4802a" stroke="#10965a" stroke-width="1"/><rect x="850.5" y="460.5" width="21" height="19" fill="#fdba31" stroke="#10965a" stroke-width="1"/><rect x="879.5" y="460.5" width="21" height="19" fill="#c4802a" stroke="#10965a" stroke-width="1"/><rect x="908.5" y="460.5" width="21" height="19" fill="#fdba31" stroke="#10965a" stroke-width="1"/><rect x="936.5" y="460.5" width="21" height="19" fill="#c4802a" stroke="#10965a" stroke-width="1"/><rect x="965.5" y="460.5" width="21" height="19" fill="#fdba31" stroke="#10965a" stroke-width="1"/><rect x="994.5" y="460.5" width="21" height="19" fill="#c4802a" stroke="#10965a" stroke-width="1"/><rect x="1022.5" y="460.5" width="21" height="19" fill="#fdba31" stroke="#10965a" stroke-width="1"/><rect x="1051.5" y="460.5" width="21" height="19" fill="#35d3a7" stroke="#10965a" stroke-width="1"/><rect x="1080.5" y="460.5" width="21" height="19" fill="#35d3a7" stroke="#10965a" stroke-width="1"/><rect x="1108.5" y="460.5" width="21" height="19" fill="#c4802a" stroke="#10965a" stroke-width="1"/><rect x="1137.5" y="460.5" width="21" height="19" fill="#c4802a" stroke="#10965a" stroke-width="1"/><rect x="1166.5" y="460.5" width="21" height="19" fill="#c4802a" stroke="#10965a" stroke-width="1"/><rect x="1194.5" y="460.5" width="21" height="19" fill="#c4802a" stroke="#10965a" stroke-width="1"/><rect x="1223.5" y="460.5" width="21" height="19" fill="#fdba31" stroke="#10965a" stroke-width="1"/><rect x="1252.5" y="460.5" width="21" height="19" fill="#fdba31" stroke="#10965a" stroke-width="1"/><rect x="1281.5" y="460.5" width="21" height="19" fill="#fdba31" stroke="#10965a" stroke-width="1"/><rect x="1309.5" y="460.5" width="21" height="19" fill="#35d3a7" stroke="#10965a" stroke-width="1"/><rect x="1338.5" y="460.5" width="21" height="19" fill="#c4802a" stroke="#10965a" stroke-width="1"/><rect x="1367.5" y="460.5" width="21" height="19" fill="#c4802a" stroke="#10965a" stroke-width="1"/><rect x="1395.5" y="460.5" width="21" height="19" fill="#fdba31" stroke="#10965a" stroke-width="1"/><rect x="1424.5" y="460.5" width="21" height="19" fill="#c4802a" stroke="#10965a" stroke-width="1"/><rect x="1453.5" y="460.5" width="21" height="19" fill="#c4802a" stroke="#10965a" stroke-width="1"/><rect x="1481.5" y="460.5" width="21" height="19" fill="#c4802a" stroke="#10965a" stroke-width="1"/><rect x="1510.5" y="460.5" width="21" height="19" fill="#fdba31" stroke="#10965a" stroke-width="1"/><rect x="1539.5" y="460.5" width="21" height="19" fill="#fdba31" stroke="#10965a" stroke-width="1"/><rect x="1567.5" y="460.5" width="21" height="19" fill="#35d3a7" stroke="#10965a" stroke-width="1"/><rect x="1596.5" y="460.5" width="21" height="19" fill="#c4802a" stroke="#10965a" stroke-width="1"/><rect x="1625.5" y="460.5" width="21" height="19" fill="#35d3a7" stroke="#10965a" stroke-width="1"/><rect x="1653.5" y="460.5" width="21" height="19" fill="#35d3a7" stroke="#10965a" stroke-width="1"/><rect x="1682.5" y="460.5" width="21" height="19" fill="#c4802a" stroke="#10965a" stroke-width="1"/><rect x="1711.5" y="460.5" width="21" height="19" fill="#ff8829" stroke="#10965a" stroke-width="1"/><rect x="133.5" y="485.5" width="21" height="19" fill="#d5f38b" stroke="#10965a" stroke-width="1"/><rect x="162.5" y="485.5" width="21" height="19" fill="#fdba31" stroke="#10965a" stroke-width="1"/><rect x="191.5" y="485.5" width="21" height="19" fill="#fdba31" stroke="#10965a" stroke-width="1"/><rect x="219.5" y="485.5" width="21" height="19" fill="#c4802a" stroke="#10965a" stroke-width="1"/><rect x="248.5" y="485.5" width="21" height="19" fill="#fdba31" stroke="#10965a" stroke-width="1"/><rect x="277.5" y="485.5" width="21" height="19" fill="#fdba31" stroke="#10965a" stroke-width="1"/><rect x="305.5" y="485.5" width="21" height="19" fill="#fdba31" stroke="#10965a" stroke-width="1"/><rect x="334.5" y="485.5" width="21" height="19" fill="#c4802a" stroke="#10965a" stroke-width="1"/><rect x="363.5" y="485.5" width="21" height="19" fill="#fdba31" stroke="#10965a" stroke-width="1"/><rect x="391.5" y="485.5" width="21" height="19" fill="#fdba31" stroke="#10965a" stroke-width="1"/><rect x="420.5" y="485.5" width="21" height="19" fill="#c4802a" stroke="#10965a" stroke-width="1"/><rect x="449.5" y="485.5" width="21" height="19" fill="#fdba31" stroke="#10965a" stroke-width="1"/><rect x="477.5" y="485.5" width="21" height="19" fill="#c4802a" stroke="#10965a" stroke-width="1"/><rect x="506.5" y="485.5" width="21" height="19" fill="#c4802a" stroke="#10965a" stroke-width="1"/><rect x="535.5" y="485.5" width="21" height="19" fill="#ff8829" stroke="#10965a" stroke-width="1"/><rect x="563.5" y="485.5" width="21" height="19" fill="#ff8829" stroke="#10965a" stroke-width="1"/><rect x="592.5" y="485.5" width="21" height="19" fill="#c4802a" stroke="#10965a" stroke-width="1"/><rect x="621.5" y="485.5" width="21" height="19" fill="#ff8829" stroke="#10965a" stroke-width="1"/><rect x="650.5" y="485.5" width="21" height="19" fill="#ff8829" stroke="#10965a" stroke-width="1"/><rect x="678.5" y="485.5" width="21" height="19" fill="#fdba31" stroke="#10965a" stroke-width="1"/><rect x="707.5" y="485.5" width="21" height="19" fill="#ff8829" stroke="#10965a" stroke-width="1"/><rect x="736.5" y="485.5" width="21" height="19" fill="#c4802a" stroke="#10965a" stroke-width="1"/><rect x="764.5" y="485.5" width="21" height="19" fill="#fdba31" stroke="#10965a" stroke-width="1"/><rect x="793.5" y="485.5" width="21" height="19" fill="#c4802a" stroke="#10965a" stroke-width="1"/><rect x="822.5" y="485.5" width="21" height="19" fill="#ff8829" stroke="#10965a" stroke-width="1"/><rect x="850.5" y="485.5" width="21" height="19" fill="#ff8829" stroke="#10965a" stroke-width="1"/><rect x="879.5" y="485.5" width="21" height="19" fill="#c4802a" stroke="#10965a" stroke-width="1"/><rect x="908.5" y="485.5" width="21" height="19" fill="#c4802a" stroke="#10965a" stroke-width="1"/><rect x="936.5" y="485.5" width="21" height="19" fill="#c4802a" stroke="#10965a" stroke-width="1"/><rect x="965.5" y="485.5" width="21" height="19" fill="#d5f38b" stroke="#10965a" stroke-width="1"/><rect x="994.5" y="485.5" width="21" height="19" fill="#c4802a" stroke="#10965a" stroke-width="1"/><rect x="1022.5" y="485.5" width="21" height="19" fill="#c4802a" stroke="#10965a" stroke-width="1"/><rect x="1051.5" y="485.5" width="21" height="19" fill="#ff8829" stroke="#10965a" stroke-width="1"/><rect x="1080.5" y="485.5" width="21" height="19" fill="#fdba31" stroke="#10965a" stroke-width="1"/><rect x="1108.5" y="485.5" width="21" height="19" fill="#2757b5" stroke="#10965a" stroke-width="1"/><rect x="1137.5" y="485.5" width="21" height="19" fill="#35d3a7" stroke="#10965a" stroke-width="1"/><rect x="1166.5" y="485.5" width="21" height="19" fill="#c4802a" stroke="#10965a" stroke-width="1"/><rect x="1194.5" y="485.5" width="21" height="19" fill="#c4802a" stroke="#10965a" stroke-width="1"/><rect x="1223.5" y="485.5" width="21" height="19" fill="#d5f38b" stroke="#10965a" stroke-width="1"/><rect x="1252.5" y="485.5" width="21" height="19" fill="#c4802a" stroke="#10965a" stroke-width="1"/><rect x="1281.5" y="485.5" width="21" height="19" fill="#fdba31" stroke="#10965a" stroke-width="1"/><rect x="1309.5" y="485.5" width="21" height="19" fill="#ff8829" stroke="#10965a" stroke-width="1"/><rect x="1338.5" y="485.5" width="21" height="19" fill="#fdba31" stroke="#10965a" stroke-width="1"/><rect x="1367.5" y="485.5" width="21" height="19" fill="#c4802a" stroke="#10965a" stroke-width="1"/><rect x="1395.5" y="485.5" width="21" height="19" fill="#c4802a" stroke="#10965a" stroke-width="1"/><rect x="1424.5" y="485.5" width="21" height="19" fill="#fdba31" stroke="#10965a" stroke-width="1"/><rect x="1453.5" y="485.5" width="21" height="19" fill="#2757b5" stroke="#10965a" stroke-width="1"/><rect x="1481.5" y="485.5" width="21" height="19" fill="#fdba31" stroke="#10965a" stroke-width="1"/><rect x="1510.5" y="485.5" width="21" height="19" fill="#c4802a" stroke="#10965a" stroke-width="1"/><rect x="1539.5" y="485.5" width="21" height="19" fill="#c4802a" stroke="#10965a" stroke-width="1"/><rect x="1567.5" y="485.5" width="21" height="19" fill="#fdba31" stroke="#10965a" stroke-width="1"/><rect x="1596.5" y="485.5" width="21" height="19" fill="#d5f38b" stroke="#10965a" stroke-width="1"/><rect x="1625.5" y="485.5" width="21" height="19" fill="#35d3a7" stroke="#10965a" stroke-width="1"/><rect x="1653.5" y="485.5" width="21" height="19" fill="#c4802a" stroke="#10965a" stroke-width="1"/><rect x="1682.5" y="485.5" width="21" height="19" fill="#fdba31" stroke="#10965a" stroke-width="1"/><rect x="1711.5" y="485.5" width="21" height="19" fill="#fdba31" stroke="#10965a" stroke-width="1"/><rect x="133.5" y="510.5" width="21" height="19" fill="#fdba31" stroke="#10965a" stroke-width="1"/><rect x="162.5" y="510.5" width="21" height="19" fill="#fdba31" stroke="#10965a" stroke-width="1"/><rect x="191.5" y="510.5" width="21" height="19" fill="#fdba31" stroke="#10965a" stroke-width="1"/><rect x="219.5" y="510.5" width="21" height="19" fill="#c4802a" stroke="#10965a" stroke-width="1"/><rect x="248.5" y="510.5" width="21" height="19" fill="#c4802a" stroke="#10965a" stroke-width="1"/><rect x="277.5" y="510.5" width="21" height="19" fill="#c4802a" stroke="#10965a" stroke-width="1"/><rect x="305.5" y="510.5" width="21" height="19" fill="#c4802a" stroke="#10965a" stroke-width="1"/><rect x="334.5" y="510.5" width="21" height="19" fill="#a8c6fa" stroke="#10965a" stroke-width="1"/><rect x="363.5" y="510.5" width="21" height="19" fill="#c4802a" stroke="#10965a" stroke-width="1"/><rect x="391.5" y="510.5" width="21" height="19" fill="#ff8829" stroke="#10965a" stroke-width="1"/><rect x="420.5" y="510.5" width="21" height="19" fill="#c4802a" stroke="#10965a" stroke-width="1"/><rect x="449.5" y="510.5" width="21" height="19" fill="#fdba31" stroke="#10965a" stroke-width="1"/><rect x="477.5" y="510.5" width="21" height="19" fill="#fdba31" stroke="#10965a" stroke-width="1"/><rect x="506.5" y="510.5" width="21" height="19" fill="#c4802a" stroke="#10965a" stroke-width="1"/><rect x="535.5" y="510.5" width="21" height="19" fill="#fdba31" stroke="#10965a" stroke-width="1"/><rect x="563.5" y="510.5" width="21" height="19" fill="#fdba31" stroke="#10965a" stroke-width="1"/><rect x="592.5" y="510.5" width="21" height="19" fill="#fdba31" stroke="#10965a" stroke-width="1"/><rect x="621.5" y="510.5" width="21" height="19" fill="#c4802a" stroke="#10965a" stroke-width="1"/><rect x="650.5" y="510.5" width="21" height="19" fill="#c4802a" stroke="#10965a" stroke-width="1"/><rect x="678.5" y="510.5" width="21" height="19" fill="#fdba31" stroke="#10965a" stroke-width="1"/><rect x="707.5" y="510.5" width="21" height="19" fill="#c4802a" stroke="#10965a" stroke-width="1"/><rect x="736.5" y="510.5" width="21" height="19" fill="#a8c6fa" stroke="#10965a" stroke-width="1"/><rect x="764.5" y="510.5" width="21" height="19" fill="#fdba31" stroke="#10965a" stroke-width="1"/><rect x="793.5" y="510.5" width="21" height="19" fill="#ff8829" stroke="#10965a" stroke-width="1"/><rect x="822.5" y="510.5" width="21" height="19" fill="#fdba31" stroke="#10965a" stroke-width="1"/><rect x="850.5" y="510.5" width="21" height="19" fill="#35d3a7" stroke="#10965a" stroke-width="1"/><rect x="879.5" y="510.5" width="21" height="19" fill="#fdba31" stroke="#10965a" stroke-width="1"/><rect x="908.5" y="510.5" width="21" height="19" fill="#fdba31" stroke="#10965a" stroke-width="1"/><rect x="936.5" y="510.5" width="21" height="19" fill="#c4802a" stroke="#10965a" stroke-width="1"/><rect x="965.5" y="510.5" width="21" height="19" fill="#c4802a" stroke="#10965a" stroke-width="1"/><rect x="994.5" y="510.5" width="21" height="19" fill="#c4802a" stroke="#10965a" stroke-width="1"/><rect x="1022.5" y="510.5" width="21" height="19" fill="#c4802a" stroke="#10965a" stroke-width="1"/><rect x="1051.5" y="510.5" width="21" height="19" fill="#c4802a" stroke="#10965a" stroke-width="1"/><rect x="1080.5" y="510.5" width="21" height="19" fill="#c4802a" stroke="#10965a" stroke-width="1"/><rect x="1108.5" y="510.5" width="21" height="19" fill="#fdba31" stroke="#10965a" stroke-width="1"/><rect x="1137.5" y="510.5" width="21" height="19" fill="#35d3a7" stroke="#10965a" stroke-width="1"/><rect x="1166.5" y="510.5" width="21" height="19" fill="#ff8829" stroke="#10965a" stroke-width="1"/><rect x="1194.5" y="510.5" width="21" height="19" fill="#c4802a" stroke="#10965a" stroke-width="1"/><rect x="1223.5" y="510.5" width="21" height="19" fill="#fdba31" stroke="#10965a" stroke-width="1"/><rect x="1252.5" y="510.5" width="21" height="19" fill="#ff8829" stroke="#10965a" stroke-width="1"/><rect x="1281.5" y="510.5" width="21" height="19" fill="#c4802a" stroke="#10965a" stroke-width="1"/><rect x="1309.5" y="510.5" width="21" height="19" fill="#c4802a" stroke="#10965a" stroke-width="1"/><rect x="1338.5" y="510.5" width="21" height="19" fill="#fdba31" stroke="#10965a" stroke-width="1"/><rect x="1367.5" y="510.5" width="21" height="19" fill="#fdba31" stroke="#10965a" stroke-width="1"/><rect x="1395.5" y="510.5" width="21" height="19" fill="#c4802a" stroke="#10965a" stroke-width="1"/><rect x="1424.5" y="510.5" width="21" height="19" fill="#c4802a" stroke="#10965a" stroke-width="1"/><rect x="1453.5" y="510.5" width="21" height="19" fill="#fdba31" stroke="#10965a" stroke-width="1"/><rect x="1481.5" y="510.5" width="21" height="19" fill="#35d3a7" stroke="#10965a" stroke-width="1"/><rect x="1510.5" y="510.5" width="21" height="19" fill="#c4802a" stroke="#10965a" stroke-width="1"/><rect x="1539.5" y="510.5" width="21" height="19" fill="#fdba31" stroke="#10965a" stroke-width="1"/><rect x="1567.5" y="510.5" width="21" height="19" fill="#35d3a7" stroke="#10965a" stroke-width="1"/><rect x="1596.5" y="510.5" width="21" height="19" fill="#fdba31" stroke="#10965a" stroke-width="1"/><rect x="1625.5" y="510.5" width="21" height="19" fill="#fdba31" stroke="#10965a" stroke-width="1"/><rect x="1653.5" y="510.5" width="21" height="19" fill="#c4802a" stroke="#10965a" stroke-width="1"/><rect x="1682.5" y="510.5" width="21" height="19" fill="#c4802a" stroke="#10965a" stroke-width="1"/><rect x="1711.5" y="510.5" width="21" height="19" fill="#c4802a" stroke="#10965a" stroke-width="1"/><rect x="133.5" y="535.5" width="21" height="19" fill="#c4802a" stroke="#10965a" stroke-width="1"/><rect x="162.5" y="535.5" width="21" height="19" fill="#c4802a" stroke="#10965a" stroke-width="1"/><rect x="191.5" y="535.5" width="21" height="19" fill="#c4802a" stroke="#10965a" stroke-width="1"/><rect x="219.5" y="535.5" width="21" height="19" fill="#c4802a" stroke="#10965a" stroke-width="1"/><rect x="248.5" y="535.5" width="21" height="19" fill="#c4802a" stroke="#10965a" stroke-width="1"/><rect x="277.5" y="535.5" width="21" height="19" fill="#fdba31" stroke="#10965a" stroke-width="1"/><rect x="305.5" y="535.5" width="21" height="19" fill="#3da0d8" stroke="#10965a" stroke-width="1"/><rect x="334.5" y="535.5" width="21" height="19" fill="#fdba31" stroke="#10965a" stroke-width="1"/><rect x="363.5" y="535.5" width="21" height="19" fill="#c4802a" stroke="#10965a" stroke-width="1"/><rect x="391.5" y="535.5" width="21" height="19" fill="#fdba31" stroke="#10965a" stroke-width="1"/><rect x="420.5" y="535.5" width="21" height="19" fill="#fdba31" stroke="#10965a" stroke-width="1"/><rect x="449.5" y="535.5" width="21" height="19" fill="#c4802a" stroke="#10965a" stroke-width="1"/><rect x="477.5" y="535.5" width="21" height="19" fill="#fdba31" stroke="#10965a" stroke-width="1"/><rect x="506.5" y="535.5" width="21" height="19" fill="#c4802a" stroke="#10965a" stroke-width="1"/><rect x="535.5" y="535.5" width="21" height="19" fill="#fdba31" stroke="#10965a" stroke-width="1"/><rect x="563.5" y="535.5" width="21" height="19" fill="#fdba31" stroke="#10965a" stroke-width="1"/><rect x="592.5" y="535.5" width="21" height="19" fill="#c4802a" stroke="#10965a" stroke-width="1"/><rect x="621.5" y="535.5" width="21" height="19" fill="#fdba31" stroke="#10965a" stroke-width="1"/><rect x="650.5" y="535.5" width="21" height="19" fill="#fdba31" stroke="#10965a" stroke-width="1"/><rect x="678.5" y="535.5" width="21" height="19" fill="#c4802a" stroke="#10965a" stroke-width="1"/><rect x="707.5" y="535.5" width="21" height="19" fill="#fdba31" stroke="#10965a" stroke-width="1"/><rect x="736.5" y="535.5" width="21" height="19" fill="#3da0d8" stroke="#10965a" stroke-width="1"/><rect x="764.5" y="535.5" width="21" height="19" fill="#fdba31" stroke="#10965a" stroke-width="1"/><rect x="793.5" y="535.5" width="21" height="19" fill="#fdba31" stroke="#10965a" stroke-width="1"/><rect x="822.5" y="535.5" width="21" height="19" fill="#fdba31" stroke="#10965a" stroke-width="1"/><rect x="850.5" y="535.5" width="21" height="19" fill="#35d3a7" stroke="#10965a" stroke-width="1"/><rect x="879.5" y="535.5" width="21" height="19" fill="#c4802a" stroke="#10965a" stroke-width="1"/><rect x="908.5" y="535.5" width="21" height="19" fill="#c4802a" stroke="#10965a" stroke-width="1"/><rect x="936.5" y="535.5" width="21" height="19" fill="#3da0d8" stroke="#10965a" stroke-width="1"/><rect x="965.5" y="535.5" width="21" height="19" fill="#c4802a" stroke="#10965a" stroke-width="1"/><rect x="994.5" y="535.5" width="21" height="19" fill="#fdba31" stroke="#10965a" stroke-width="1"/><rect x="1022.5" y="535.5" width="21" height="19" fill="#fdba31" stroke="#10965a" stroke-width="1"/><rect x="1051.5" y="535.5" width="21" height="19" fill="#ff8829" stroke="#10965a" stroke-width="1"/><rect x="1080.5" y="535.5" width="21" height="19" fill="#c4802a" stroke="#10965a" stroke-width="1"/><rect x="1108.5" y="535.5" width="21" height="19" fill="#35d3a7" stroke="#10965a" stroke-width="1"/><rect x="1137.5" y="535.5" width="21" height="19" fill="#c4802a" stroke="#10965a" stroke-width="1"/><rect x="1166.5" y="535.5" width="21" height="19" fill="#fdba31" stroke="#10965a" stroke-width="1"/><rect x="1194.5" y="535.5" width="21" height="19" fill="#c4802a" stroke="#10965a" stroke-width="1"/><rect x="1223.5" y="535.5" width="21" height="19" fill="#3da0d8" stroke="#10965a" stroke-width="1"/><rect x="1252.5" y="535.5" width="21" height="19" fill="#c4802a" stroke="#10965a" stroke-width="1"/><rect x="1281.5" y="535.5" width="21" height="19" fill="#fdba31" stroke="#10965a" stroke-width="1"/><rect x="1309.5" y="535.5" width="21" height="19" fill="#c4802a" stroke="#10965a" stroke-width="1"/><rect x="1338.5" y="535.5" width="21" height="19" fill="#c4802a" stroke="#10965a" stroke-width="1"/><rect x="1367.5" y="535.5" width="21" height="19" fill="#fdba31" stroke="#10965a" stroke-width="1"/><rect x="1395.5" y="535.5" width="21" height="19" fill="#fdba31" stroke="#10965a" stroke-width="1"/><rect x="1424.5" y="535.5" width="21" height="19" fill="#fdba31" stroke="#10965a" stroke-width="1"/><rect x="1453.5" y="535.5" width="21" height="19" fill="#fdba31" stroke="#10965a" stroke-width="1"/><rect x="1481.5" y="535.5" width="21" height="19" fill="#ff8829" stroke="#10965a" stroke-width="1"/><rect x="1510.5" y="535.5" width="21" height="19" fill="#c4802a" stroke="#10965a" stroke-width="1"/><rect x="1539.5" y="535.5" width="21" height="19" fill="#ff8829" stroke="#10965a" stroke-width="1"/><rect x="1567.5" y="535.5" width="21" height="19" fill="#fdba31" stroke="#10965a" stroke-width="1"/><rect x="1596.5" y="535.5" width="21" height="19" fill="#ff8829" stroke="#10965a" stroke-width="1"/><rect x="1625.5" y="535.5" width="21" height="19" fill="#c4802a" stroke="#10965a" stroke-width="1"/><rect x="1653.5" y="535.5" width="21" height="19" fill="#fdba31" stroke="#10965a" stroke-width="1"/><rect x="1682.5" y="535.5" width="21" height="19" fill="#3da0d8" stroke="#10965a" stroke-width="1"/><rect x="1711.5" y="535.5" width="21" height="19" fill="#3da0d8" stroke="#10965a" stroke-width="1"/>
<text x="313.7" y="324.2" text-anchor="middle" font-size="11.8" font-weight="700" fill="#fff">1</text><text x="401.4" y="324.2" text-anchor="middle" font-size="11.8" font-weight="700" fill="#fff">2</text><text x="141.7" y="349.2" text-anchor="middle" font-size="11.8" font-weight="700" fill="#111">1</text><text x="1202.7" y="349.2" text-anchor="middle" font-size="11.8" font-weight="700" fill="#111">1</text><text x="1317.7" y="374.2" text-anchor="middle" font-size="11.8" font-weight="700" fill="#fff">1</text><text x="141.7" y="399.2" text-anchor="middle" font-size="11.8" font-weight="700" fill="#111">1</text><text x="1434.4" y="424.2" text-anchor="middle" font-size="11.8" font-weight="700" fill="#fff">2</text><text x="143.4" y="449.2" text-anchor="middle" font-size="11.8" font-weight="700" fill="#111">2</text><text x="514.7" y="449.2" text-anchor="middle" font-size="11.8" font-weight="700" fill="#fff">1</text><text x="1260.7" y="449.2" text-anchor="middle" font-size="11.8" font-weight="700" fill="#fff">1</text><text x="1375.7" y="474.2" text-anchor="middle" font-size="11.8" font-weight="700" fill="#fff">1</text><text x="1432.7" y="474.2" text-anchor="middle" font-size="11.8" font-weight="700" fill="#fff">1</text><text x="172.4" y="499.2" text-anchor="middle" font-size="11.8" font-weight="700" fill="#111">2</text><text x="631.4" y="499.2" text-anchor="middle" font-size="11.8" font-weight="700" fill="#111">2</text><text x="1145.7" y="499.2" text-anchor="middle" font-size="11.8" font-weight="700" fill="#111">1</text><text x="371.7" y="524.2" text-anchor="middle" font-size="11.8" font-weight="700" fill="#fff">1</text><text x="1059.7" y="524.2" text-anchor="middle" font-size="11.8" font-weight="700" fill="#fff">1</text><text x="1289.7" y="524.2" text-anchor="middle" font-size="11.8" font-weight="700" fill="#fff">1</text><text x="543.7" y="549.2" text-anchor="middle" font-size="11.8" font-weight="700" fill="#111">1</text>
</svg>
<span class="t" style="left:93.40px;top:300.85px;font-size:12.5px;color:#626a97;letter-spacing:0.222px;">40k</span>
<span class="t" style="left:93.80px;top:366.57px;font-size:12.5px;color:#626a97;letter-spacing:0.022px;">32k</span>
<span class="t" style="left:93.40px;top:432.29px;font-size:12.5px;color:#626a97;letter-spacing:0.222px;">24k</span>
<span class="t" style="left:97.40px;top:498.01px;font-size:12.5px;color:#626a97;letter-spacing:-1.778px;">16k</span>
<span class="t" style="left:101.00px;top:563.73px;font-size:12.5px;color:#626a97;letter-spacing:-0.203px;">8k</span>
<span class="t" style="left:107.05px;top:630.45px;font-size:12.5px;color:#626a97;">0</span>
<span class="t" style="left:1753.30px;top:300.85px;font-size:12.5px;color:#626a97;letter-spacing:-0.036px;">240k</span>
<span class="t" style="left:1753.30px;top:366.57px;font-size:12.5px;color:#626a97;letter-spacing:0.397px;">200k</span>
<span class="t" style="left:1753.30px;top:432.29px;font-size:12.5px;color:#626a97;letter-spacing:-0.970px;">160k</span>
<span class="t" style="left:1753.30px;top:498.01px;font-size:12.5px;color:#626a97;letter-spacing:-0.970px;">120k</span>
<span class="t" style="left:1753.30px;top:563.73px;font-size:12.5px;color:#626a97;letter-spacing:0.422px;">80k</span>
<span class="t" style="left:1753.30px;top:629.45px;font-size:12.5px;color:#626a97;letter-spacing:0.422px;">40k</span>
<span class="t" style="left:83px;top:470px;font-size:12.5px;color:#666;letter-spacing:0.35px;transform:translate(-50%,-50%) rotate(-90deg)">Paid/Organic</span>
<span class="t" style="left:1792.5px;top:470px;font-size:12.5px;color:#666;letter-spacing:0.05px;transform:translate(-50%,-50%) rotate(90deg)">Cost/Revenue (USD)</span>
<span class="t" style="left:154.68px;top:645.00px;font-size:12px;color:#626a97;letter-spacing:-0.689px;">12. Nov</span>
<span class="t" style="left:211.68px;top:645.00px;font-size:12px;color:#626a97;letter-spacing:-0.689px;">14. Nov</span>
<span class="t" style="left:269.68px;top:645.00px;font-size:12px;color:#626a97;letter-spacing:-0.689px;">16. Nov</span>
<span class="t" style="left:326.68px;top:645.00px;font-size:12px;color:#626a97;letter-spacing:-0.689px;">18. Nov</span>
<span class="t" style="left:383.68px;top:645.00px;font-size:12px;color:#626a97;letter-spacing:-0.689px;">20. Nov</span>
<span class="t" style="left:441.68px;top:645.00px;font-size:12px;color:#626a97;letter-spacing:-0.689px;">22. Nov</span>
<span class="t" style="left:498.68px;top:645.00px;font-size:12px;color:#626a97;letter-spacing:-0.689px;">24. Nov</span>
<span class="t" style="left:555.68px;top:645.00px;font-size:12px;color:#626a97;letter-spacing:-0.689px;">26. Nov</span>
<span class="t" style="left:613.68px;top:645.00px;font-size:12px;color:#626a97;letter-spacing:-0.689px;">28. Nov</span>
<span class="t" style="left:670.68px;top:645.00px;font-size:12px;color:#626a97;letter-spacing:-0.689px;">30. Nov</span>
<span class="t" style="left:731.69px;top:645.00px;font-size:12px;color:#626a97;letter-spacing:-0.694px;">2. Dec</span>
<span class="t" style="left:788.69px;top:645.00px;font-size:12px;color:#626a97;letter-spacing:-0.694px;">4. Dec</span>
<span class="t" style="left:845.69px;top:645.00px;font-size:12px;color:#626a97;letter-spacing:-0.694px;">6. Dec</span>
<span class="t" style="left:903.69px;top:645.00px;font-size:12px;color:#626a97;letter-spacing:-0.694px;">8. Dec</span>
<span class="t" style="left:957.68px;top:645.00px;font-size:12px;color:#626a97;letter-spacing:-0.689px;">10. Dec</span>
<span class="t" style="left:1014.68px;top:645.00px;font-size:12px;color:#626a97;letter-spacing:-0.689px;">12. Dec</span>
<span class="t" style="left:1072.68px;top:645.00px;font-size:12px;color:#626a97;letter-spacing:-0.689px;">14. Dec</span>
<span class="t" style="left:1129.68px;top:645.00px;font-size:12px;color:#626a97;letter-spacing:-0.689px;">16. Dec</span>
<span class="t" style="left:1186.68px;top:645.00px;font-size:12px;color:#626a97;letter-spacing:-0.689px;">18. Dec</span>
<span class="t" style="left:1244.68px;top:645.00px;font-size:12px;color:#626a97;letter-spacing:-0.689px;">20. Dec</span>
<span class="t" style="left:1301.68px;top:645.00px;font-size:12px;color:#626a97;letter-spacing:-0.689px;">22. Dec</span>
<span class="t" style="left:1359.68px;top:645.00px;font-size:12px;color:#626a97;letter-spacing:-0.689px;">24. Dec</span>
<span class="t" style="left:1416.68px;top:645.00px;font-size:12px;color:#626a97;letter-spacing:-0.689px;">26. Dec</span>
<span class="t" style="left:1473.68px;top:645.00px;font-size:12px;color:#626a97;letter-spacing:-0.689px;">28. Dec</span>
<span class="t" style="left:1531.68px;top:645.00px;font-size:12px;color:#626a97;letter-spacing:-0.689px;">30. Dec</span>
<span class="t" style="left:1592.59px;top:645.00px;font-size:12px;color:#626a97;letter-spacing:-0.654px;">1. Jan</span>
<span class="t" style="left:1649.59px;top:645.00px;font-size:12px;color:#626a97;letter-spacing:-0.654px;">3. Jan</span>
<span class="t" style="left:1706.77px;top:645.00px;font-size:12px;color:#626a97;letter-spacing:-0.654px;">5. Jan</span>
<div class="abs" style="left:128px;top:669px;width:1610px;height:15px;background:#cbcbcb"></div>
<div class="abs" style="left:128px;top:669px;width:14.5px;height:15px;background:#e8e8e8;border:1px solid #cdcdcd"></div>
<div class="abs" style="left:1723.5px;top:669px;width:14.5px;height:15px;background:#e8e8e8;border:1px solid #cdcdcd"></div>
<svg style="left:128px;top:669px" width="1610" height="15" viewBox="0 0 1610 15"><path d="M5.6 7.5 L9.2 4.6 V10.4 Z" fill="#222"/><path d="M1604.4 7.5 L1600.8 4.600 V10.4 Z" fill="#222"/><rect x="801" y="4" width="2" height="6" fill="#787878"/><rect x="804" y="4" width="2" height="6" fill="#787878"/><rect x="807" y="4" width="2" height="6" fill="#787878"/></svg>
<div class="lg" style="left:425.2px;width:55.80000000000001px;border:1.5px solid #8b46e8;"></div>
<span class="t" style="left:458.80px;top:706.30px;font-size:13px;color:#626a97;letter-spacing:-0.473px;">All</span>
<div class="lg" style="left:489.3px;width:136.3px;"></div>
<span class="t" style="left:523.30px;top:706.30px;font-size:13px;color:#626a97;letter-spacing:-0.092px;">Budget Increase</span>
<div class="lg" style="left:634.2px;width:143.5999999999999px;"></div>
<span class="t" style="left:668.30px;top:706.30px;font-size:13px;color:#626a97;letter-spacing:-0.054px;">Budget Decrease</span>
<div class="lg" style="left:786.1px;width:90.5px;"></div>
<span class="t" style="left:819.90px;top:706.30px;font-size:13px;color:#626a97;letter-spacing:0.207px;">Opened</span>
<div class="lg" style="left:885.3px;width:93.30000000000007px;"></div>
<span class="t" style="left:919.30px;top:706.30px;font-size:13px;color:#626a97;letter-spacing:0.310px;">Stopped</span>
<div class="lg" style="left:987.4px;width:112.19999999999993px;"></div>
<span class="t" style="left:1021.20px;top:706.30px;font-size:13px;color:#626a97;letter-spacing:-0.261px;">Bid Increase</span>
<div class="lg" style="left:1108.4px;width:83.19999999999982px;"></div>
<span class="t" style="left:1142.50px;top:706.30px;font-size:13px;color:#626a97;letter-spacing:-0.284px;">Restart</span>
<div class="lg" style="left:1200.4px;width:122.09999999999991px;"></div>
<span class="t" style="left:1234.00px;top:706.30px;font-size:13px;color:#626a97;letter-spacing:-0.181px;">App Featuring</span>
<div class="lg" style="left:1331.3px;width:118.10000000000014px;"></div>
<span class="t" style="left:1365.00px;top:706.30px;font-size:13px;color:#626a97;letter-spacing:-0.213px;">Bid Decrease</span>
<svg style="left:0;top:690px" width="1825" height="46" viewBox="0 690 1825 46" fill="none" stroke-linecap="round" stroke-linejoin="round"><path d="M443.2 706.8 L448.8 712.4 L443.2 718 L437.6 712.4 Z" fill="#858585" stroke="#fff" stroke-width="1.6" paint-order="stroke"/><g stroke="#c4802a" stroke-width="1.1"><ellipse cx="505" cy="713.2" rx="8.2" ry="3.6"/><path d="M496.8 713.2 V716.6 Q496.8 720.2 505 720.2 Q513.2 720.2 513.2 716.6 V713.2"/><path d="M500 719.4 V716.2 M505 720.2 V716.9 M510 719.4 V716.2"/><path d="M505 713 V704.6 M502.6 707 L505 704.6 L507.4 707"/></g><g stroke="#fdba31" stroke-width="1.1"><ellipse cx="650" cy="711.2" rx="8.2" ry="3.8"/><path d="M641.8 711.2 V714.8 Q641.8 718.6 650 718.6 Q658.2 718.6 658.2 714.8 V711.2"/><path d="M645 717.6 V714.4 M650 718.6 V715.2 M655 717.6 V714.4"/><path d="M650 705.4 V712.4 M647.6 710 L650 712.4 L652.4 710"/></g><g stroke="#c6ec6a" stroke-width="1.1"><path d="M800.5 706.5 Q801.5 712 806.5 713.2 Q801.5 714.4 800.5 720 Q799.5 714.4 794.5 713.2 Q799.5 712 800.5 706.5 Z"/><path d="M807.5 704.5 V708.5 M805.5 706.5 H809.5 M809 716 V718 M808 717 H810"/></g><g stroke="#ff8829" stroke-width="1.1"><circle cx="901.2" cy="712.6" r="7.6"/><path d="M897 712.6 H905.4"/></g><g stroke="#2757b5" stroke-width="1"><ellipse cx="1000" cy="711" rx="5.6" ry="2.6"/><path d="M994.4 711 V715 Q994.4 717.6 1000 717.6"/><ellipse cx="1006" cy="714.2" rx="5.6" ry="2.6"/><path d="M1000.4 714.2 V718.2 Q1000.4 720.8 1006 720.8 Q1011.600 720.8 1011.6 718.2 V714.2"/><path d="M1003 720.2 V717 M1006 720.8 V717.4 M1009 720.2 V717"/><path d="M1000 710.6 V704 M998 706 L1000 704 L1002 706"/></g><g stroke="#35d3a7" stroke-width="1.2"><path d="M1116.4 710.4 Q1118.6 705.6 1124 705.6 Q1128.4 705.6 1130.8 709 M1131 705.4 V709.2 H1127.2"/><path d="M1131.2 714.8 Q1129 719.6 1123.600 719.6 Q1119.200 719.600 1116.8 716.2 M1116.6 719.8 V716 H1120.4"/></g><g stroke="#3da0d8" stroke-width="1.1"><rect x="1209.4" y="706" width="5" height="5"/><rect x="1217.2" y="706" width="5" height="5"/><rect x="1209.4" y="713.8" width="5" height="5"/><rect x="1217.2" y="713.8" width="5" height="5"/></g><g stroke="#a8c6fa" stroke-width="1"><ellipse cx="1343.6" cy="710.6" rx="5.6" ry="2.6"/><path d="M1338 710.6 V714.6 Q1338 717.2 1343.6 717.2"/><ellipse cx="1349.6" cy="713.8" rx="5.6" ry="2.6"/><path d="M1344 713.8 V717.8 Q1344 720.4 1349.6 720.4 Q1355.2 720.4 1355.2 717.8 V713.8"/><path d="M1346.6 719.8 V716.6 M1349.6 720.4 V717 M1352.6 719.8 V716.6"/><path d="M1343.6 704 V710.4 M1341.6 708.400 L1343.6 710.4 L1345.6 708.4"/></g></svg>
<div class="abs" style="left:61px;top:770px;width:1753px;height:60px;background:#fff;border:1px solid #d2d2d6;border-radius:8px"></div>
<div class="abs" style="left:1765px;top:779px;width:32px;height:29px;background:#fff;border:1px solid #e3e5ee;border-radius:4px"></div>
<div class="abs" style="left:1771px;top:783.3px;width:20px;height:20px;background:#722ee0;border-radius:2px"></div>
<svg style="left:1771px;top:783.3px" width="20" height="20" viewBox="0 0 20 20" fill="none" stroke="#fff" stroke-width="1.1"><rect x="4.6" y="5.6" width="10.8" height="8.8" rx=".8"/><path d="M4.6 9.2 H15.4 M8.2 9.2 V14.4"/></svg>
<div class="abs" style="left:1820px;top:143px;width:5px;height:675px;background:#f3f4fc"></div>
</body></html>
